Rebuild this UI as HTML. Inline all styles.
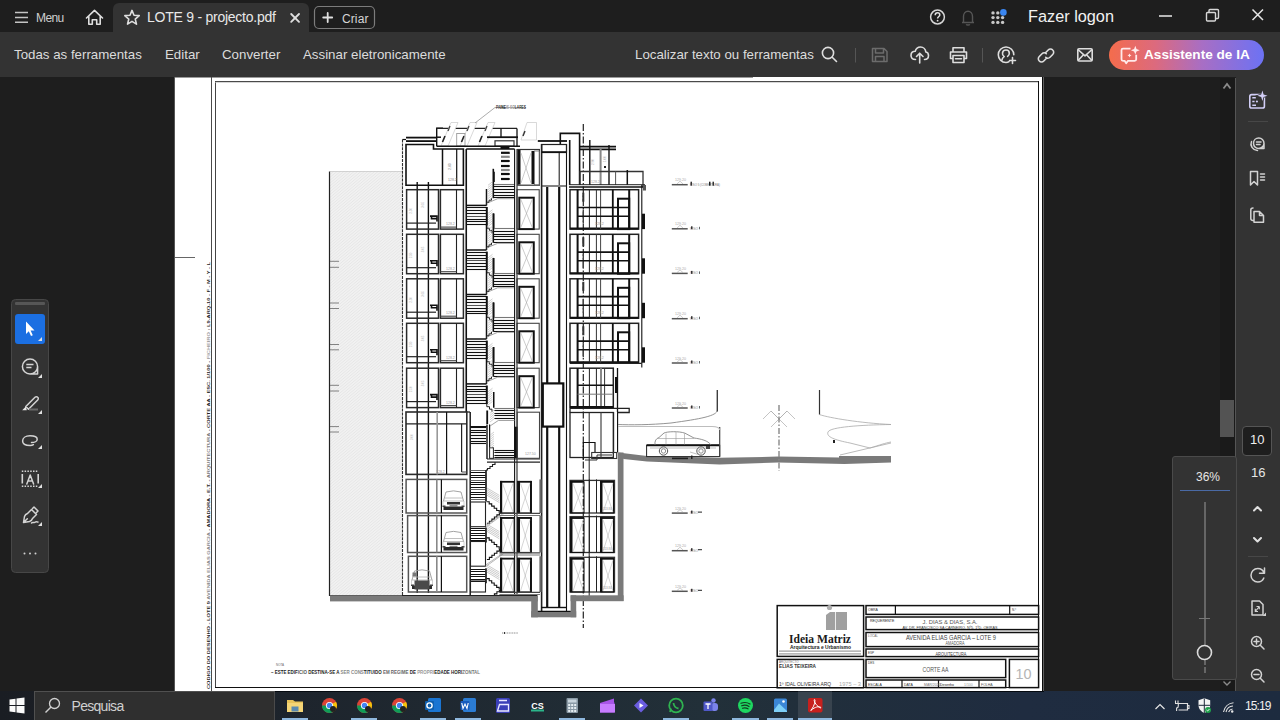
<!DOCTYPE html>
<html><head><meta charset="utf-8"><style>
*{margin:0;padding:0;box-sizing:border-box}
html,body{width:1280px;height:720px;overflow:hidden;background:#1e1e1e;font-family:"Liberation Sans",sans-serif;position:relative}
.abs{position:absolute}
.t{position:absolute;color:#dcdcdc;font-size:13.3px;white-space:nowrap;line-height:16px}
svg{position:absolute;overflow:visible}
</style></head><body>
<div class="abs" style="left:0px;top:0px;width:1280px;height:32px;background:#1e1e1e"></div>
<div class="abs" style="left:113px;top:3px;width:196px;height:30px;background:#333;border-radius:6px 6px 0 0"></div>
<div class="abs" style="left:0px;top:32px;width:1280px;height:45px;background:#333"></div>
<div class="abs" style="left:753px;top:77px;width:527px;height:1px;background:#333"></div>
<div class="abs" style="left:0px;top:77px;width:1236px;height:614px;background:#1e1e1e"></div>
<div class="abs" style="left:1220px;top:78px;width:15px;height:613px;background:#1a1a1a"></div>
<div class="abs" style="left:1220px;top:400px;width:14px;height:37px;background:#535353"></div>
<div class="abs" style="left:1235px;top:78px;width:45px;height:613px;background:#333;border-left:1px solid #555"></div>
<div class="abs" style="left:0px;top:691px;width:1280px;height:29px;background:linear-gradient(90deg,#1a1d23 0%,#1d232b 20%,#223039 55%,#1f2c40 80%,#1d2b3f 100%)"></div>
<div class="abs" style="left:175px;top:77px;width:867px;height:614px;background:#fff"></div>
<div class="abs" style="left:175px;top:77px;width:578px;height:1px;background:#9a9a9a"></div>
<svg style="left:0;top:0" width="1280" height="720"><defs><pattern id="hatch" width="2.2" height="2.2" patternUnits="userSpaceOnUse" patternTransform="rotate(50)"><rect width="2.2" height="2.2" fill="#f1f1f1"/><line x1="0" y1="0" x2="0" y2="2.2" stroke="#e0e0e0" stroke-width="0.9"/></pattern></defs><rect x="211.00" y="77.00" width="1.00" height="614.00" fill="#4a4a4a"/><rect x="215.00" y="81.00" width="824.00" height="1.00" fill="#4a4a4a"/><rect x="215.00" y="81.00" width="1.00" height="607.00" fill="#444"/><rect x="1038.00" y="81.00" width="1.00" height="607.00" fill="#111"/><rect x="215.00" y="687.00" width="824.00" height="1.00" fill="#111"/><rect x="215.00" y="82.00" width="823.00" height="0.60" fill="#bbb"/><rect x="1042.00" y="77.00" width="1.00" height="614.00" fill="#0a0a0a"/><rect x="1043.00" y="77.00" width="1.00" height="614.00" fill="#606060"/><rect x="174.00" y="77.00" width="1.00" height="614.00" fill="#555"/><rect x="175.00" y="691.00" width="869.00" height="1.00" fill="#050a10"/><line x1="175.00" y1="257.50" x2="195.00" y2="257.50" stroke="#666" stroke-width="1" /><text x="0" y="0" transform="translate(209.6 689) rotate(-90)" font-family="Liberation Sans" font-size="4.2" font-weight="bold" fill="#222" textLength="427" lengthAdjust="spacingAndGlyphs">CODIGO DO DESENHO - LOTE 9 <tspan fill="#888">AVENIDA ELIAS GARCIA</tspan> - AMADORA - E.T. - <tspan fill="#777">ARQUITECTURA</tspan> - CORTE AA - ESC. 1/100 - <tspan fill="#999">FICHEIRO</tspan> : L9-ARQ-10 - F - M - Y - L</text><rect x="329.5" y="171.5" width="73" height="424" fill="url(#hatch)"/><line x1="329.50" y1="171.50" x2="329.50" y2="596.00" stroke="#222" stroke-width="1.2" /><line x1="329.50" y1="171.50" x2="402.50" y2="171.50" stroke="#999" stroke-width="0.8" stroke-dasharray="1 1"/><line x1="330.00" y1="261.30" x2="339.00" y2="261.30" stroke="#666" stroke-width="0.8" /><line x1="330.00" y1="267.30" x2="339.00" y2="267.30" stroke="#666" stroke-width="0.8" /><line x1="330.00" y1="303.00" x2="339.00" y2="303.00" stroke="#666" stroke-width="0.8" /><line x1="330.00" y1="308.50" x2="339.00" y2="308.50" stroke="#666" stroke-width="0.8" /><line x1="330.00" y1="344.50" x2="339.00" y2="344.50" stroke="#666" stroke-width="0.8" /><line x1="330.00" y1="349.80" x2="339.00" y2="349.80" stroke="#666" stroke-width="0.8" /><line x1="330.00" y1="385.30" x2="339.00" y2="385.30" stroke="#666" stroke-width="0.8" /><line x1="330.00" y1="391.00" x2="339.00" y2="391.00" stroke="#666" stroke-width="0.8" /><line x1="330.00" y1="426.60" x2="339.00" y2="426.60" stroke="#666" stroke-width="0.8" /><line x1="330.00" y1="432.00" x2="339.00" y2="432.00" stroke="#666" stroke-width="0.8" /><line x1="329.50" y1="595.50" x2="402.50" y2="595.50" stroke="#222" stroke-width="1.2" /><line x1="402.50" y1="139.50" x2="402.50" y2="596.00" stroke="#333" stroke-width="1.1" stroke-dasharray="3 0.9"/><line x1="402.50" y1="139.50" x2="406.00" y2="139.50" stroke="#111" stroke-width="1.2" /><line x1="406.00" y1="137.60" x2="437.00" y2="137.60" stroke="#111" stroke-width="1.8" /><line x1="406.00" y1="141.10" x2="437.00" y2="141.10" stroke="#111" stroke-width="1.8" /><path d="M436.7 146.5V128.3H443" stroke="#111" stroke-width="1.4" fill="none" /><line x1="436.70" y1="128.40" x2="517.00" y2="128.40" stroke="#222" stroke-width="1.3" /><path d="M441 146L451 122.5H458L448 146Z" stroke="#c8c8c8" stroke-width="0.7" fill="#fff" /><line x1="442.50" y1="142.00" x2="445.00" y2="136.00" stroke="#222" stroke-width="1.6" /><line x1="448.00" y1="131.00" x2="450.00" y2="126.00" stroke="#444" stroke-width="1.3" /><path d="M460 146L470 122.5H477L467 146Z" stroke="#c8c8c8" stroke-width="0.7" fill="#fff" /><line x1="461.50" y1="142.00" x2="464.00" y2="136.00" stroke="#222" stroke-width="1.6" /><line x1="467.00" y1="131.00" x2="469.00" y2="126.00" stroke="#444" stroke-width="1.3" /><path d="M478 146L488 122.5H495L485 146Z" stroke="#c8c8c8" stroke-width="0.7" fill="#fff" /><line x1="479.50" y1="142.00" x2="482.00" y2="136.00" stroke="#222" stroke-width="1.6" /><line x1="485.00" y1="131.00" x2="487.00" y2="126.00" stroke="#444" stroke-width="1.3" /><path d="M521 140L527 122.5H536.5V140Z" stroke="#c8c8c8" stroke-width="0.7" fill="#fff" /><line x1="523.00" y1="136.00" x2="525.00" y2="131.00" stroke="#333" stroke-width="1.4" /><rect x="456.70" y="133.50" width="8.30" height="12.50" stroke="#999" stroke-width="0.9" fill="none" /><line x1="487.00" y1="137.20" x2="518.00" y2="137.20" stroke="#111" stroke-width="1.8" /><line x1="436.70" y1="137.20" x2="441.00" y2="137.20" stroke="#111" stroke-width="1.5" /><line x1="501.00" y1="128.40" x2="501.00" y2="137.20" stroke="#111" stroke-width="1.3" /><line x1="517.00" y1="128.40" x2="517.00" y2="146.00" stroke="#111" stroke-width="1.3" /><rect x="495.00" y="140.80" width="19.00" height="5.40" stroke="#333" stroke-width="1.2" fill="none" /><line x1="437.00" y1="146.30" x2="520.00" y2="146.30" stroke="#111" stroke-width="1.4" /><path d="M475 123L495 107.5H526" stroke="#888" stroke-width="0.7" fill="none" /><text x="496" y="109.3" font-family="Liberation Sans" font-size="4.5" font-weight="bold" fill="#333" textLength="30" lengthAdjust="spacingAndGlyphs">PA<tspan fill="#111">INE</tspan><tspan fill="#999">IS SO</tspan>LARES</text><path d="M406 144.5H433.5V149H463.4V185.2H406Z" stroke="#111" stroke-width="1.6" fill="none" /><line x1="442.50" y1="149.00" x2="442.50" y2="185.50" stroke="#111" stroke-width="1.5" /><line x1="456.70" y1="149.00" x2="456.70" y2="185.20" stroke="#111" stroke-width="1.2" /><text x="451" y="170" font-family="Liberation Sans" font-size="3.5" fill="#777" transform="rotate(-90 451 170)">2.80</text><text x="448" y="181" font-family="Liberation Sans" font-size="3.5" fill="#888" >128.2</text><line x1="417.20" y1="182.00" x2="417.20" y2="593.00" stroke="#111" stroke-width="1.4" /><line x1="428.40" y1="182.00" x2="428.40" y2="593.00" stroke="#111" stroke-width="1.4" /><rect x="406.60" y="189.70" width="31.90" height="39.40" stroke="#2a2a2a" stroke-width="1.5" fill="none" /><rect x="440.40" y="189.70" width="23.00" height="39.40" stroke="#2a2a2a" stroke-width="1.5" fill="none" /><line x1="456.50" y1="189.70" x2="456.50" y2="229.10" stroke="#222" stroke-width="1.1" /><line x1="440.40" y1="227.10" x2="456.50" y2="227.10" stroke="#444" stroke-width="1.1" /><line x1="406.60" y1="223.10" x2="436.00" y2="223.10" stroke="#222" stroke-width="1.2" /><path d="M430 216.1H437V221.6M431.5 216.1V218.6H437" stroke="#111" stroke-width="1.6" fill="none" /><text x="446" y="225.1" font-family="Liberation Sans" font-size="3.5" fill="#999" >128.2</text><text x="412" y="213.7" font-family="Liberation Sans" font-size="3" fill="#aaa" transform="rotate(-90 412 213.7)">2.50</text><text x="424" y="207.7" font-family="Liberation Sans" font-size="3" fill="#aaa" transform="rotate(-90 424 207.7)">3.05</text><line x1="493.75" y1="184.50" x2="514.60" y2="184.50" stroke="#777" stroke-width="1.1" /><line x1="493.75" y1="186.50" x2="514.60" y2="186.50" stroke="#111" stroke-width="1.1" /><line x1="493.75" y1="189.50" x2="514.60" y2="189.50" stroke="#111" stroke-width="1.1" /><line x1="493.75" y1="192.50" x2="514.60" y2="192.50" stroke="#111" stroke-width="1.1" /><line x1="493.75" y1="195.50" x2="514.60" y2="195.50" stroke="#111" stroke-width="1.1" /><line x1="493.75" y1="197.50" x2="514.60" y2="197.50" stroke="#111" stroke-width="1.1" /><line x1="493.30" y1="168.80" x2="493.30" y2="198.20" stroke="#111" stroke-width="1.6" /><line x1="486.50" y1="189.00" x2="486.50" y2="205.40" stroke="#111" stroke-width="1.5" /><line x1="466.25" y1="205.40" x2="486.50" y2="205.40" stroke="#111" stroke-width="1.5" /><line x1="466.25" y1="207.50" x2="487.00" y2="207.50" stroke="#111" stroke-width="1.1" /><line x1="466.25" y1="210.50" x2="487.00" y2="210.50" stroke="#111" stroke-width="1.1" /><line x1="466.25" y1="213.50" x2="487.00" y2="213.50" stroke="#111" stroke-width="1.1" /><line x1="466.25" y1="216.50" x2="487.00" y2="216.50" stroke="#555" stroke-width="1.1" /><line x1="466.25" y1="219.50" x2="487.00" y2="219.50" stroke="#111" stroke-width="1.1" /><line x1="466.25" y1="221.50" x2="487.00" y2="221.50" stroke="#111" stroke-width="1.1" /><line x1="466.25" y1="224.50" x2="487.00" y2="224.50" stroke="#111" stroke-width="1.1" /><line x1="486.80" y1="207.00" x2="486.80" y2="225.50" stroke="#111" stroke-width="2" /><line x1="493.75" y1="213.40" x2="493.75" y2="229.20" stroke="#111" stroke-width="1.5" /><path d="M487.5 203.0L497.7 198.7H514.4" stroke="#999" stroke-width="0.9" fill="none" /><path d="M486.5 205.39999999999998V202.2H489V200.2H491.5V198.2" stroke="#222" stroke-width="1.0" fill="none" /><path d="M486.8 225.5V228.2H489.5V230.7H492V233.2" stroke="#222" stroke-width="1.0" fill="none" /><line x1="488.00" y1="185.30" x2="492.50" y2="181.70" stroke="#b0b0b0" stroke-width="0.6" /><line x1="488.00" y1="187.50" x2="492.50" y2="183.90" stroke="#b0b0b0" stroke-width="0.6" /><line x1="488.00" y1="189.70" x2="492.50" y2="186.10" stroke="#b0b0b0" stroke-width="0.6" /><line x1="488.00" y1="191.90" x2="492.50" y2="188.30" stroke="#b0b0b0" stroke-width="0.6" /><line x1="488.00" y1="194.10" x2="492.50" y2="190.50" stroke="#b0b0b0" stroke-width="0.6" /><line x1="488.00" y1="196.30" x2="492.50" y2="192.70" stroke="#b0b0b0" stroke-width="0.6" /><line x1="488.00" y1="198.50" x2="492.50" y2="194.90" stroke="#b0b0b0" stroke-width="0.6" /><line x1="488.00" y1="200.70" x2="492.50" y2="197.10" stroke="#b0b0b0" stroke-width="0.6" /><line x1="488.00" y1="213.30" x2="492.50" y2="209.70" stroke="#b0b0b0" stroke-width="0.6" /><line x1="488.00" y1="215.50" x2="492.50" y2="211.90" stroke="#b0b0b0" stroke-width="0.6" /><line x1="488.00" y1="217.70" x2="492.50" y2="214.10" stroke="#b0b0b0" stroke-width="0.6" /><line x1="488.00" y1="219.90" x2="492.50" y2="216.30" stroke="#b0b0b0" stroke-width="0.6" /><line x1="488.00" y1="222.10" x2="492.50" y2="218.50" stroke="#b0b0b0" stroke-width="0.6" /><line x1="488.00" y1="224.30" x2="492.50" y2="220.70" stroke="#b0b0b0" stroke-width="0.6" /><line x1="488.00" y1="226.50" x2="492.50" y2="222.90" stroke="#b0b0b0" stroke-width="0.6" /><rect x="517.00" y="189.70" width="22.20" height="39.40" stroke="#444" stroke-width="1.1" fill="none" /><rect x="519.30" y="197.70" width="14.45" height="31.40" stroke="#111" stroke-width="2" fill="#fff" /><path d="M520.5 198.7L532.5 228.1M532.5 198.7L520.5 228.1" stroke="#aaa" stroke-width="0.6" fill="none" /><rect x="406.60" y="234.30" width="31.90" height="39.40" stroke="#2a2a2a" stroke-width="1.5" fill="none" /><rect x="440.40" y="234.30" width="23.00" height="39.40" stroke="#2a2a2a" stroke-width="1.5" fill="none" /><line x1="456.50" y1="234.30" x2="456.50" y2="273.70" stroke="#222" stroke-width="1.1" /><line x1="440.40" y1="271.70" x2="456.50" y2="271.70" stroke="#444" stroke-width="1.1" /><line x1="406.60" y1="267.70" x2="436.00" y2="267.70" stroke="#222" stroke-width="1.2" /><path d="M430 260.7H437V266.2M431.5 260.7V263.2H437" stroke="#111" stroke-width="1.6" fill="none" /><text x="446" y="269.7" font-family="Liberation Sans" font-size="3.5" fill="#999" >128.2</text><text x="412" y="258.3" font-family="Liberation Sans" font-size="3" fill="#aaa" transform="rotate(-90 412 258.3)">2.50</text><text x="424" y="252.3" font-family="Liberation Sans" font-size="3" fill="#aaa" transform="rotate(-90 424 252.3)">3.05</text><line x1="493.75" y1="228.50" x2="514.60" y2="228.50" stroke="#777" stroke-width="1.1" /><line x1="493.75" y1="231.50" x2="514.60" y2="231.50" stroke="#111" stroke-width="1.1" /><line x1="493.75" y1="234.50" x2="514.60" y2="234.50" stroke="#111" stroke-width="1.1" /><line x1="493.75" y1="236.50" x2="514.60" y2="236.50" stroke="#111" stroke-width="1.1" /><line x1="493.75" y1="239.50" x2="514.60" y2="239.50" stroke="#111" stroke-width="1.1" /><line x1="493.75" y1="242.50" x2="514.60" y2="242.50" stroke="#111" stroke-width="1.1" /><line x1="493.30" y1="213.40" x2="493.30" y2="242.80" stroke="#111" stroke-width="1.6" /><line x1="486.50" y1="224.80" x2="486.50" y2="250.00" stroke="#111" stroke-width="1.5" /><line x1="466.25" y1="250.00" x2="486.50" y2="250.00" stroke="#111" stroke-width="1.5" /><line x1="466.25" y1="252.50" x2="487.00" y2="252.50" stroke="#111" stroke-width="1.1" /><line x1="466.25" y1="255.50" x2="487.00" y2="255.50" stroke="#111" stroke-width="1.1" /><line x1="466.25" y1="258.50" x2="487.00" y2="258.50" stroke="#111" stroke-width="1.1" /><line x1="466.25" y1="260.50" x2="487.00" y2="260.50" stroke="#555" stroke-width="1.1" /><line x1="466.25" y1="263.50" x2="487.00" y2="263.50" stroke="#111" stroke-width="1.1" /><line x1="466.25" y1="266.50" x2="487.00" y2="266.50" stroke="#111" stroke-width="1.1" /><line x1="466.25" y1="269.50" x2="487.00" y2="269.50" stroke="#111" stroke-width="1.1" /><line x1="486.80" y1="251.60" x2="486.80" y2="270.10" stroke="#111" stroke-width="2" /><line x1="493.75" y1="258.00" x2="493.75" y2="273.80" stroke="#111" stroke-width="1.5" /><path d="M487.5 247.60000000000002L497.7 243.3H514.4" stroke="#999" stroke-width="0.9" fill="none" /><path d="M486.5 250.0V246.8H489V244.8H491.5V242.8" stroke="#222" stroke-width="1.0" fill="none" /><path d="M486.8 270.1V272.8H489.5V275.3H492V277.8" stroke="#222" stroke-width="1.0" fill="none" /><line x1="488.00" y1="229.90" x2="492.50" y2="226.30" stroke="#b0b0b0" stroke-width="0.6" /><line x1="488.00" y1="232.10" x2="492.50" y2="228.50" stroke="#b0b0b0" stroke-width="0.6" /><line x1="488.00" y1="234.30" x2="492.50" y2="230.70" stroke="#b0b0b0" stroke-width="0.6" /><line x1="488.00" y1="236.50" x2="492.50" y2="232.90" stroke="#b0b0b0" stroke-width="0.6" /><line x1="488.00" y1="238.70" x2="492.50" y2="235.10" stroke="#b0b0b0" stroke-width="0.6" /><line x1="488.00" y1="240.90" x2="492.50" y2="237.30" stroke="#b0b0b0" stroke-width="0.6" /><line x1="488.00" y1="243.10" x2="492.50" y2="239.50" stroke="#b0b0b0" stroke-width="0.6" /><line x1="488.00" y1="245.30" x2="492.50" y2="241.70" stroke="#b0b0b0" stroke-width="0.6" /><line x1="488.00" y1="257.90" x2="492.50" y2="254.30" stroke="#b0b0b0" stroke-width="0.6" /><line x1="488.00" y1="260.10" x2="492.50" y2="256.50" stroke="#b0b0b0" stroke-width="0.6" /><line x1="488.00" y1="262.30" x2="492.50" y2="258.70" stroke="#b0b0b0" stroke-width="0.6" /><line x1="488.00" y1="264.50" x2="492.50" y2="260.90" stroke="#b0b0b0" stroke-width="0.6" /><line x1="488.00" y1="266.70" x2="492.50" y2="263.10" stroke="#b0b0b0" stroke-width="0.6" /><line x1="488.00" y1="268.90" x2="492.50" y2="265.30" stroke="#b0b0b0" stroke-width="0.6" /><line x1="488.00" y1="271.10" x2="492.50" y2="267.50" stroke="#b0b0b0" stroke-width="0.6" /><rect x="517.00" y="234.30" width="22.20" height="39.40" stroke="#444" stroke-width="1.1" fill="none" /><rect x="519.30" y="242.30" width="14.45" height="31.40" stroke="#111" stroke-width="2" fill="#fff" /><path d="M520.5 243.3L532.5 272.7M532.5 243.3L520.5 272.7" stroke="#aaa" stroke-width="0.6" fill="none" /><rect x="406.60" y="278.80" width="31.90" height="39.40" stroke="#2a2a2a" stroke-width="1.5" fill="none" /><rect x="440.40" y="278.80" width="23.00" height="39.40" stroke="#2a2a2a" stroke-width="1.5" fill="none" /><line x1="456.50" y1="278.80" x2="456.50" y2="318.20" stroke="#222" stroke-width="1.1" /><line x1="440.40" y1="316.20" x2="456.50" y2="316.20" stroke="#444" stroke-width="1.1" /><line x1="406.60" y1="312.20" x2="436.00" y2="312.20" stroke="#222" stroke-width="1.2" /><path d="M430 305.2H437V310.7M431.5 305.2V307.7H437" stroke="#111" stroke-width="1.6" fill="none" /><text x="446" y="314.2" font-family="Liberation Sans" font-size="3.5" fill="#999" >128.2</text><text x="412" y="302.8" font-family="Liberation Sans" font-size="3" fill="#aaa" transform="rotate(-90 412 302.8)">2.50</text><text x="424" y="296.8" font-family="Liberation Sans" font-size="3" fill="#aaa" transform="rotate(-90 424 296.8)">3.05</text><line x1="493.75" y1="273.50" x2="514.60" y2="273.50" stroke="#777" stroke-width="1.1" /><line x1="493.75" y1="275.50" x2="514.60" y2="275.50" stroke="#111" stroke-width="1.1" /><line x1="493.75" y1="278.50" x2="514.60" y2="278.50" stroke="#111" stroke-width="1.1" /><line x1="493.75" y1="281.50" x2="514.60" y2="281.50" stroke="#111" stroke-width="1.1" /><line x1="493.75" y1="284.50" x2="514.60" y2="284.50" stroke="#111" stroke-width="1.1" /><line x1="493.75" y1="286.50" x2="514.60" y2="286.50" stroke="#111" stroke-width="1.1" /><line x1="493.30" y1="257.90" x2="493.30" y2="287.30" stroke="#111" stroke-width="1.6" /><line x1="486.50" y1="269.30" x2="486.50" y2="294.50" stroke="#111" stroke-width="1.5" /><line x1="466.25" y1="294.50" x2="486.50" y2="294.50" stroke="#111" stroke-width="1.5" /><line x1="466.25" y1="296.50" x2="487.00" y2="296.50" stroke="#111" stroke-width="1.1" /><line x1="466.25" y1="299.50" x2="487.00" y2="299.50" stroke="#111" stroke-width="1.1" /><line x1="466.25" y1="302.50" x2="487.00" y2="302.50" stroke="#111" stroke-width="1.1" /><line x1="466.25" y1="305.50" x2="487.00" y2="305.50" stroke="#555" stroke-width="1.1" /><line x1="466.25" y1="308.50" x2="487.00" y2="308.50" stroke="#111" stroke-width="1.1" /><line x1="466.25" y1="311.50" x2="487.00" y2="311.50" stroke="#111" stroke-width="1.1" /><line x1="466.25" y1="313.50" x2="487.00" y2="313.50" stroke="#111" stroke-width="1.1" /><line x1="486.80" y1="296.10" x2="486.80" y2="314.60" stroke="#111" stroke-width="2" /><line x1="493.75" y1="302.50" x2="493.75" y2="318.30" stroke="#111" stroke-width="1.5" /><path d="M487.5 292.1L497.7 287.8H514.4" stroke="#999" stroke-width="0.9" fill="none" /><path d="M486.5 294.5V291.3H489V289.3H491.5V287.3" stroke="#222" stroke-width="1.0" fill="none" /><path d="M486.8 314.6V317.3H489.5V319.8H492V322.3" stroke="#222" stroke-width="1.0" fill="none" /><line x1="488.00" y1="274.40" x2="492.50" y2="270.80" stroke="#b0b0b0" stroke-width="0.6" /><line x1="488.00" y1="276.60" x2="492.50" y2="273.00" stroke="#b0b0b0" stroke-width="0.6" /><line x1="488.00" y1="278.80" x2="492.50" y2="275.20" stroke="#b0b0b0" stroke-width="0.6" /><line x1="488.00" y1="281.00" x2="492.50" y2="277.40" stroke="#b0b0b0" stroke-width="0.6" /><line x1="488.00" y1="283.20" x2="492.50" y2="279.60" stroke="#b0b0b0" stroke-width="0.6" /><line x1="488.00" y1="285.40" x2="492.50" y2="281.80" stroke="#b0b0b0" stroke-width="0.6" /><line x1="488.00" y1="287.60" x2="492.50" y2="284.00" stroke="#b0b0b0" stroke-width="0.6" /><line x1="488.00" y1="289.80" x2="492.50" y2="286.20" stroke="#b0b0b0" stroke-width="0.6" /><line x1="488.00" y1="302.40" x2="492.50" y2="298.80" stroke="#b0b0b0" stroke-width="0.6" /><line x1="488.00" y1="304.60" x2="492.50" y2="301.00" stroke="#b0b0b0" stroke-width="0.6" /><line x1="488.00" y1="306.80" x2="492.50" y2="303.20" stroke="#b0b0b0" stroke-width="0.6" /><line x1="488.00" y1="309.00" x2="492.50" y2="305.40" stroke="#b0b0b0" stroke-width="0.6" /><line x1="488.00" y1="311.20" x2="492.50" y2="307.60" stroke="#b0b0b0" stroke-width="0.6" /><line x1="488.00" y1="313.40" x2="492.50" y2="309.80" stroke="#b0b0b0" stroke-width="0.6" /><line x1="488.00" y1="315.60" x2="492.50" y2="312.00" stroke="#b0b0b0" stroke-width="0.6" /><rect x="517.00" y="278.80" width="22.20" height="39.40" stroke="#444" stroke-width="1.1" fill="none" /><rect x="519.30" y="286.80" width="14.45" height="31.40" stroke="#111" stroke-width="2" fill="#fff" /><path d="M520.5 287.8L532.5 317.2M532.5 287.8L520.5 317.2" stroke="#aaa" stroke-width="0.6" fill="none" /><rect x="406.60" y="323.30" width="31.90" height="39.40" stroke="#2a2a2a" stroke-width="1.5" fill="none" /><rect x="440.40" y="323.30" width="23.00" height="39.40" stroke="#2a2a2a" stroke-width="1.5" fill="none" /><line x1="456.50" y1="323.30" x2="456.50" y2="362.70" stroke="#222" stroke-width="1.1" /><line x1="440.40" y1="360.70" x2="456.50" y2="360.70" stroke="#444" stroke-width="1.1" /><line x1="406.60" y1="356.70" x2="436.00" y2="356.70" stroke="#222" stroke-width="1.2" /><path d="M430 349.7H437V355.2M431.5 349.7V352.2H437" stroke="#111" stroke-width="1.6" fill="none" /><text x="446" y="358.7" font-family="Liberation Sans" font-size="3.5" fill="#999" >128.2</text><text x="412" y="347.3" font-family="Liberation Sans" font-size="3" fill="#aaa" transform="rotate(-90 412 347.3)">2.50</text><text x="424" y="341.3" font-family="Liberation Sans" font-size="3" fill="#aaa" transform="rotate(-90 424 341.3)">3.05</text><line x1="493.75" y1="317.50" x2="514.60" y2="317.50" stroke="#777" stroke-width="1.1" /><line x1="493.75" y1="320.50" x2="514.60" y2="320.50" stroke="#111" stroke-width="1.1" /><line x1="493.75" y1="323.50" x2="514.60" y2="323.50" stroke="#111" stroke-width="1.1" /><line x1="493.75" y1="325.50" x2="514.60" y2="325.50" stroke="#111" stroke-width="1.1" /><line x1="493.75" y1="328.50" x2="514.60" y2="328.50" stroke="#111" stroke-width="1.1" /><line x1="493.75" y1="331.50" x2="514.60" y2="331.50" stroke="#111" stroke-width="1.1" /><line x1="493.30" y1="302.40" x2="493.30" y2="331.80" stroke="#111" stroke-width="1.6" /><line x1="486.50" y1="313.80" x2="486.50" y2="339.00" stroke="#111" stroke-width="1.5" /><line x1="466.25" y1="339.00" x2="486.50" y2="339.00" stroke="#111" stroke-width="1.5" /><line x1="466.25" y1="341.50" x2="487.00" y2="341.50" stroke="#111" stroke-width="1.1" /><line x1="466.25" y1="344.50" x2="487.00" y2="344.50" stroke="#111" stroke-width="1.1" /><line x1="466.25" y1="347.50" x2="487.00" y2="347.50" stroke="#111" stroke-width="1.1" /><line x1="466.25" y1="349.50" x2="487.00" y2="349.50" stroke="#555" stroke-width="1.1" /><line x1="466.25" y1="352.50" x2="487.00" y2="352.50" stroke="#111" stroke-width="1.1" /><line x1="466.25" y1="355.50" x2="487.00" y2="355.50" stroke="#111" stroke-width="1.1" /><line x1="466.25" y1="358.50" x2="487.00" y2="358.50" stroke="#111" stroke-width="1.1" /><line x1="486.80" y1="340.60" x2="486.80" y2="359.10" stroke="#111" stroke-width="2" /><line x1="493.75" y1="347.00" x2="493.75" y2="362.80" stroke="#111" stroke-width="1.5" /><path d="M487.5 336.6L497.7 332.3H514.4" stroke="#999" stroke-width="0.9" fill="none" /><path d="M486.5 339.0V335.8H489V333.8H491.5V331.8" stroke="#222" stroke-width="1.0" fill="none" /><path d="M486.8 359.1V361.8H489.5V364.3H492V366.8" stroke="#222" stroke-width="1.0" fill="none" /><line x1="488.00" y1="318.90" x2="492.50" y2="315.30" stroke="#b0b0b0" stroke-width="0.6" /><line x1="488.00" y1="321.10" x2="492.50" y2="317.50" stroke="#b0b0b0" stroke-width="0.6" /><line x1="488.00" y1="323.30" x2="492.50" y2="319.70" stroke="#b0b0b0" stroke-width="0.6" /><line x1="488.00" y1="325.50" x2="492.50" y2="321.90" stroke="#b0b0b0" stroke-width="0.6" /><line x1="488.00" y1="327.70" x2="492.50" y2="324.10" stroke="#b0b0b0" stroke-width="0.6" /><line x1="488.00" y1="329.90" x2="492.50" y2="326.30" stroke="#b0b0b0" stroke-width="0.6" /><line x1="488.00" y1="332.10" x2="492.50" y2="328.50" stroke="#b0b0b0" stroke-width="0.6" /><line x1="488.00" y1="334.30" x2="492.50" y2="330.70" stroke="#b0b0b0" stroke-width="0.6" /><line x1="488.00" y1="346.90" x2="492.50" y2="343.30" stroke="#b0b0b0" stroke-width="0.6" /><line x1="488.00" y1="349.10" x2="492.50" y2="345.50" stroke="#b0b0b0" stroke-width="0.6" /><line x1="488.00" y1="351.30" x2="492.50" y2="347.70" stroke="#b0b0b0" stroke-width="0.6" /><line x1="488.00" y1="353.50" x2="492.50" y2="349.90" stroke="#b0b0b0" stroke-width="0.6" /><line x1="488.00" y1="355.70" x2="492.50" y2="352.10" stroke="#b0b0b0" stroke-width="0.6" /><line x1="488.00" y1="357.90" x2="492.50" y2="354.30" stroke="#b0b0b0" stroke-width="0.6" /><line x1="488.00" y1="360.10" x2="492.50" y2="356.50" stroke="#b0b0b0" stroke-width="0.6" /><rect x="517.00" y="323.30" width="22.20" height="39.40" stroke="#444" stroke-width="1.1" fill="none" /><rect x="519.30" y="331.30" width="14.45" height="31.40" stroke="#111" stroke-width="2" fill="#fff" /><path d="M520.5 332.3L532.5 361.7M532.5 332.3L520.5 361.7" stroke="#aaa" stroke-width="0.6" fill="none" /><rect x="406.60" y="368.20" width="31.90" height="39.40" stroke="#2a2a2a" stroke-width="1.5" fill="none" /><rect x="440.40" y="368.20" width="23.00" height="39.40" stroke="#2a2a2a" stroke-width="1.5" fill="none" /><line x1="456.50" y1="368.20" x2="456.50" y2="407.60" stroke="#222" stroke-width="1.1" /><line x1="440.40" y1="405.60" x2="456.50" y2="405.60" stroke="#444" stroke-width="1.1" /><line x1="406.60" y1="401.60" x2="436.00" y2="401.60" stroke="#222" stroke-width="1.2" /><path d="M430 394.59999999999997H437V400.09999999999997M431.5 394.59999999999997V397.09999999999997H437" stroke="#111" stroke-width="1.6" fill="none" /><text x="446" y="403.59999999999997" font-family="Liberation Sans" font-size="3.5" fill="#999" >128.2</text><text x="412" y="392.2" font-family="Liberation Sans" font-size="3" fill="#aaa" transform="rotate(-90 412 392.2)">2.50</text><text x="424" y="386.2" font-family="Liberation Sans" font-size="3" fill="#aaa" transform="rotate(-90 424 386.2)">3.05</text><line x1="493.75" y1="362.50" x2="514.60" y2="362.50" stroke="#777" stroke-width="1.1" /><line x1="493.75" y1="365.50" x2="514.60" y2="365.50" stroke="#111" stroke-width="1.1" /><line x1="493.75" y1="368.50" x2="514.60" y2="368.50" stroke="#111" stroke-width="1.1" /><line x1="493.75" y1="370.50" x2="514.60" y2="370.50" stroke="#111" stroke-width="1.1" /><line x1="493.75" y1="373.50" x2="514.60" y2="373.50" stroke="#111" stroke-width="1.1" /><line x1="493.75" y1="376.50" x2="514.60" y2="376.50" stroke="#111" stroke-width="1.1" /><line x1="493.30" y1="347.30" x2="493.30" y2="376.70" stroke="#111" stroke-width="1.6" /><line x1="486.50" y1="358.70" x2="486.50" y2="383.90" stroke="#111" stroke-width="1.5" /><line x1="466.25" y1="383.90" x2="486.50" y2="383.90" stroke="#111" stroke-width="1.5" /><line x1="466.25" y1="386.50" x2="487.00" y2="386.50" stroke="#111" stroke-width="1.1" /><line x1="466.25" y1="389.50" x2="487.00" y2="389.50" stroke="#111" stroke-width="1.1" /><line x1="466.25" y1="391.50" x2="487.00" y2="391.50" stroke="#111" stroke-width="1.1" /><line x1="466.25" y1="394.50" x2="487.00" y2="394.50" stroke="#555" stroke-width="1.1" /><line x1="466.25" y1="397.50" x2="487.00" y2="397.50" stroke="#111" stroke-width="1.1" /><line x1="466.25" y1="400.50" x2="487.00" y2="400.50" stroke="#111" stroke-width="1.1" /><line x1="466.25" y1="403.50" x2="487.00" y2="403.50" stroke="#111" stroke-width="1.1" /><line x1="486.80" y1="385.50" x2="486.80" y2="404.00" stroke="#111" stroke-width="2" /><line x1="493.75" y1="391.90" x2="493.75" y2="407.70" stroke="#111" stroke-width="1.5" /><path d="M487.5 381.5L497.7 377.2H514.4" stroke="#999" stroke-width="0.9" fill="none" /><path d="M486.5 383.9V380.7H489V378.7H491.5V376.7" stroke="#222" stroke-width="1.0" fill="none" /><path d="M486.8 404.0V406.7H489.5V409.2H492V411.7" stroke="#222" stroke-width="1.0" fill="none" /><line x1="488.00" y1="363.80" x2="492.50" y2="360.20" stroke="#b0b0b0" stroke-width="0.6" /><line x1="488.00" y1="366.00" x2="492.50" y2="362.40" stroke="#b0b0b0" stroke-width="0.6" /><line x1="488.00" y1="368.20" x2="492.50" y2="364.60" stroke="#b0b0b0" stroke-width="0.6" /><line x1="488.00" y1="370.40" x2="492.50" y2="366.80" stroke="#b0b0b0" stroke-width="0.6" /><line x1="488.00" y1="372.60" x2="492.50" y2="369.00" stroke="#b0b0b0" stroke-width="0.6" /><line x1="488.00" y1="374.80" x2="492.50" y2="371.20" stroke="#b0b0b0" stroke-width="0.6" /><line x1="488.00" y1="377.00" x2="492.50" y2="373.40" stroke="#b0b0b0" stroke-width="0.6" /><line x1="488.00" y1="379.20" x2="492.50" y2="375.60" stroke="#b0b0b0" stroke-width="0.6" /><line x1="488.00" y1="391.80" x2="492.50" y2="388.20" stroke="#b0b0b0" stroke-width="0.6" /><line x1="488.00" y1="394.00" x2="492.50" y2="390.40" stroke="#b0b0b0" stroke-width="0.6" /><line x1="488.00" y1="396.20" x2="492.50" y2="392.60" stroke="#b0b0b0" stroke-width="0.6" /><line x1="488.00" y1="398.40" x2="492.50" y2="394.80" stroke="#b0b0b0" stroke-width="0.6" /><line x1="488.00" y1="400.60" x2="492.50" y2="397.00" stroke="#b0b0b0" stroke-width="0.6" /><line x1="488.00" y1="402.80" x2="492.50" y2="399.20" stroke="#b0b0b0" stroke-width="0.6" /><line x1="488.00" y1="405.00" x2="492.50" y2="401.40" stroke="#b0b0b0" stroke-width="0.6" /><rect x="517.00" y="368.20" width="22.20" height="39.40" stroke="#444" stroke-width="1.1" fill="none" /><rect x="519.30" y="376.20" width="14.45" height="31.40" stroke="#111" stroke-width="2" fill="#fff" /><path d="M520.5 377.2L532.5 406.59999999999997M532.5 377.2L520.5 406.59999999999997" stroke="#aaa" stroke-width="0.6" fill="none" /><line x1="466.25" y1="149.00" x2="514.60" y2="149.00" stroke="#111" stroke-width="1.5" /><rect x="500.50" y="146.70" width="8.90" height="2.30" fill="#111"/><line x1="501.00" y1="152.80" x2="509.70" y2="152.80" stroke="#111" stroke-width="2.2" /><line x1="501.00" y1="156.80" x2="509.70" y2="156.80" stroke="#888" stroke-width="2.2" /><line x1="501.00" y1="161.00" x2="509.70" y2="161.00" stroke="#111" stroke-width="2.2" /><line x1="501.00" y1="166.00" x2="509.70" y2="166.00" stroke="#111" stroke-width="2.2" /><line x1="501.00" y1="170.00" x2="509.70" y2="170.00" stroke="#888" stroke-width="2.2" /><line x1="501.00" y1="174.00" x2="509.70" y2="174.00" stroke="#111" stroke-width="2.2" /><line x1="501.00" y1="179.00" x2="509.70" y2="179.00" stroke="#111" stroke-width="2.2" /><line x1="493.90" y1="171.70" x2="493.90" y2="182.00" stroke="#111" stroke-width="1.8" /><rect x="517.80" y="149.50" width="21.60" height="35.70" stroke="#333" stroke-width="1.2" fill="none" /><rect x="518.00" y="150.00" width="2.50" height="34.50" fill="#111"/><rect x="531.50" y="151.00" width="2.50" height="33.00" fill="#111"/><rect x="534.50" y="151.00" width="4.90" height="34.00" stroke="#666" stroke-width="0.8" fill="none" /><path d="M521 153L531 183M531 153L521 183" stroke="#aaa" stroke-width="0.6" fill="none" /><line x1="466.25" y1="149.00" x2="466.25" y2="412.00" stroke="#111" stroke-width="1.6" /><line x1="466.25" y1="412.00" x2="470.00" y2="412.00" stroke="#111" stroke-width="1.2" /><line x1="470.20" y1="412.00" x2="470.20" y2="596.00" stroke="#111" stroke-width="1.4" /><line x1="514.60" y1="149.00" x2="514.60" y2="596.00" stroke="#111" stroke-width="1.1" /><line x1="517.00" y1="149.00" x2="517.00" y2="596.00" stroke="#222" stroke-width="1.1" /><line x1="537.80" y1="141.00" x2="567.00" y2="141.00" stroke="#111" stroke-width="1.8" /><line x1="541.60" y1="144.00" x2="541.60" y2="612.00" stroke="#222" stroke-width="1.6" /><line x1="547.20" y1="187.00" x2="547.20" y2="608.00" stroke="#111" stroke-width="2.2" /><line x1="559.20" y1="152.00" x2="559.20" y2="185.00" stroke="#222" stroke-width="1.1" /><line x1="559.20" y1="187.00" x2="559.20" y2="608.00" stroke="#111" stroke-width="2.2" /><line x1="566.50" y1="144.00" x2="566.50" y2="612.00" stroke="#111" stroke-width="1.1" /><rect x="541.60" y="144.50" width="24.90" height="7.70" stroke="#222" stroke-width="1.2" fill="none" /><line x1="541.60" y1="152.20" x2="566.50" y2="152.20" stroke="#111" stroke-width="1.8" /><line x1="541.60" y1="186.00" x2="566.50" y2="186.00" stroke="#333" stroke-width="1.2" /><rect x="542.80" y="383.40" width="20.50" height="43.20" stroke="#111" stroke-width="2.2" fill="#fff" /><line x1="541.00" y1="607.50" x2="566.50" y2="607.50" stroke="#111" stroke-width="1.4" /><path d="M560.3 144V133.4H579.6V185" stroke="#111" stroke-width="1.6" fill="none" /><line x1="569.70" y1="140.00" x2="569.70" y2="185.00" stroke="#111" stroke-width="1.6" /><line x1="583.30" y1="124.00" x2="583.30" y2="628.00" stroke="#222" stroke-width="1.2" stroke-dasharray="7 2 1.5 2"/><rect x="406.00" y="412.00" width="60.80" height="62.40" stroke="#2a2a2a" stroke-width="1.6" fill="none" /><line x1="406.00" y1="423.80" x2="466.80" y2="423.80" stroke="#222" stroke-width="1.2" /><line x1="437.20" y1="412.00" x2="437.20" y2="474.40" stroke="#999" stroke-width="1.6" /><line x1="446.60" y1="412.00" x2="446.60" y2="474.40" stroke="#111" stroke-width="1.2" /><line x1="461.60" y1="423.80" x2="461.60" y2="472.00" stroke="#222" stroke-width="1.2" /><line x1="461.60" y1="472.00" x2="466.80" y2="472.00" stroke="#444" stroke-width="1" /><text x="436" y="473" font-family="Liberation Sans" font-size="3.5" fill="#999" >128.2</text><text x="413" y="440" font-family="Liberation Sans" font-size="3" fill="#aaa" transform="rotate(-90 413 440)">3.00</text><line x1="494.40" y1="408.50" x2="514.40" y2="408.50" stroke="#777" stroke-width="1.1" /><line x1="494.40" y1="410.50" x2="514.40" y2="410.50" stroke="#111" stroke-width="1.1" /><line x1="494.40" y1="413.50" x2="514.40" y2="413.50" stroke="#111" stroke-width="1.1" /><line x1="494.40" y1="415.50" x2="514.40" y2="415.50" stroke="#111" stroke-width="1.1" /><line x1="494.40" y1="418.50" x2="514.40" y2="418.50" stroke="#111" stroke-width="1.1" /><line x1="487.20" y1="410.50" x2="487.20" y2="424.00" stroke="#111" stroke-width="1.8" /><line x1="470.00" y1="426.70" x2="486.70" y2="426.70" stroke="#111" stroke-width="1.4" /><line x1="470.50" y1="427.50" x2="486.00" y2="427.50" stroke="#111" stroke-width="1.1" /><line x1="470.50" y1="430.50" x2="486.00" y2="430.50" stroke="#111" stroke-width="1.1" /><line x1="470.50" y1="432.50" x2="486.00" y2="432.50" stroke="#111" stroke-width="1.1" /><line x1="470.50" y1="435.50" x2="486.00" y2="435.50" stroke="#111" stroke-width="1.1" /><line x1="470.50" y1="438.50" x2="486.00" y2="438.50" stroke="#111" stroke-width="1.1" /><line x1="470.50" y1="441.50" x2="486.00" y2="441.50" stroke="#111" stroke-width="1.1" /><line x1="470.50" y1="443.50" x2="486.00" y2="443.50" stroke="#111" stroke-width="1.1" /><line x1="487.00" y1="424.40" x2="487.00" y2="459.00" stroke="#111" stroke-width="1.4" /><line x1="489.60" y1="424.40" x2="489.60" y2="447.80" stroke="#111" stroke-width="1.2" /><rect x="489.60" y="447.80" width="3.80" height="10.50" stroke="#222" stroke-width="1.0" fill="none" /><line x1="490.00" y1="413.20" x2="494.00" y2="410.00" stroke="#b0b0b0" stroke-width="0.6" /><line x1="490.00" y1="415.40" x2="494.00" y2="412.20" stroke="#b0b0b0" stroke-width="0.6" /><line x1="490.00" y1="417.60" x2="494.00" y2="414.40" stroke="#b0b0b0" stroke-width="0.6" /><line x1="490.00" y1="419.80" x2="494.00" y2="416.60" stroke="#b0b0b0" stroke-width="0.6" /><line x1="490.00" y1="422.00" x2="494.00" y2="418.80" stroke="#b0b0b0" stroke-width="0.6" /><line x1="490.00" y1="435.20" x2="494.00" y2="432.00" stroke="#b0b0b0" stroke-width="0.6" /><line x1="490.00" y1="437.40" x2="494.00" y2="434.20" stroke="#b0b0b0" stroke-width="0.6" /><line x1="490.00" y1="439.60" x2="494.00" y2="436.40" stroke="#b0b0b0" stroke-width="0.6" /><line x1="490.00" y1="441.80" x2="494.00" y2="438.60" stroke="#b0b0b0" stroke-width="0.6" /><line x1="490.00" y1="444.00" x2="494.00" y2="440.80" stroke="#b0b0b0" stroke-width="0.6" /><line x1="490.00" y1="446.20" x2="494.00" y2="443.00" stroke="#b0b0b0" stroke-width="0.6" /><line x1="490.00" y1="448.40" x2="494.00" y2="445.20" stroke="#b0b0b0" stroke-width="0.6" /><path d="M490 426L498.3 420.5H514.4" stroke="#999" stroke-width="0.9" fill="none" /><line x1="494.40" y1="450.50" x2="514.40" y2="450.50" stroke="#111" stroke-width="1.1" /><line x1="494.40" y1="452.50" x2="514.40" y2="452.50" stroke="#111" stroke-width="1.1" /><line x1="494.40" y1="455.50" x2="514.40" y2="455.50" stroke="#111" stroke-width="1.1" /><line x1="494.40" y1="457.50" x2="514.40" y2="457.50" stroke="#111" stroke-width="1.1" /><rect x="514.40" y="426.70" width="3.40" height="31.60" fill="#111"/><line x1="487.00" y1="459.00" x2="540.00" y2="459.00" stroke="#222" stroke-width="1.2" /><line x1="487.00" y1="462.20" x2="540.00" y2="462.20" stroke="#222" stroke-width="1.2" /><path d="M495 462.2V464.5H492.5V466.5H490V468.5H487.5V470H486" stroke="#222" stroke-width="1.1" fill="none" /><rect x="517.20" y="412.20" width="22.30" height="46.10" stroke="#444" stroke-width="1.1" fill="none" /><text x="525" y="455" font-family="Liberation Sans" font-size="3.5" fill="#999" >127.50</text><rect x="406.10" y="479.40" width="60.60" height="33.60" stroke="#555" stroke-width="1.5" fill="none" /><line x1="436.80" y1="479.40" x2="436.80" y2="513.00" stroke="#888" stroke-width="1.6" /><line x1="441.40" y1="479.40" x2="441.40" y2="513.00" stroke="#111" stroke-width="1.2" /><line x1="470.50" y1="470.50" x2="485.50" y2="470.50" stroke="#666" stroke-width="1.0" /><line x1="470.50" y1="472.50" x2="485.50" y2="472.50" stroke="#111" stroke-width="1.0" /><line x1="470.50" y1="475.50" x2="485.50" y2="475.50" stroke="#111" stroke-width="1.0" /><line x1="470.50" y1="477.50" x2="485.50" y2="477.50" stroke="#111" stroke-width="1.0" /><line x1="470.50" y1="480.50" x2="485.50" y2="480.50" stroke="#666" stroke-width="1.0" /><line x1="470.50" y1="482.50" x2="485.50" y2="482.50" stroke="#111" stroke-width="1.0" /><line x1="470.50" y1="484.50" x2="485.50" y2="484.50" stroke="#111" stroke-width="1.0" /><line x1="470.50" y1="487.50" x2="485.50" y2="487.50" stroke="#111" stroke-width="1.0" /><line x1="470.50" y1="489.50" x2="485.50" y2="489.50" stroke="#666" stroke-width="1.0" /><line x1="470.50" y1="492.50" x2="485.50" y2="492.50" stroke="#111" stroke-width="1.0" /><line x1="470.50" y1="494.50" x2="485.50" y2="494.50" stroke="#111" stroke-width="1.0" /><line x1="470.50" y1="497.50" x2="485.50" y2="497.50" stroke="#111" stroke-width="1.0" /><line x1="470.50" y1="499.50" x2="485.50" y2="499.50" stroke="#666" stroke-width="1.0" /><line x1="486.00" y1="470.00" x2="486.00" y2="501.50" stroke="#111" stroke-width="1.6" /><rect x="470.50" y="502.00" width="15.00" height="24.70" stroke="#222" stroke-width="1.1" fill="none" /><path d="M486.7 501.7 H489.2 V503.9 H491.7 V506.1 H494.2 V508.3 H496.7 V510.5 H499.2 V512.7" stroke="#111" stroke-width="1.1" fill="none" /><path d="M499.4 512.8 V514.9 H496.9 V517.0 H494.4 V519.1 H491.9 V521.2 H489.4 V523.3 H486.9" stroke="#111" stroke-width="1.1" fill="none" /><line x1="486.70" y1="487.80" x2="499.40" y2="495.40" stroke="#aaa" stroke-width="0.6" /><line x1="486.70" y1="489.60" x2="499.40" y2="497.20" stroke="#aaa" stroke-width="0.6" /><line x1="486.70" y1="491.40" x2="499.40" y2="499.00" stroke="#aaa" stroke-width="0.6" /><line x1="486.70" y1="493.20" x2="499.40" y2="500.80" stroke="#aaa" stroke-width="0.6" /><line x1="486.70" y1="495.00" x2="499.40" y2="502.60" stroke="#aaa" stroke-width="0.6" /><path d="M485.5 527.2L503.3 514.4M485.5 525.6L502 514.4" stroke="#999" stroke-width="0.7" fill="none" /><rect x="500.80" y="481.60" width="13.40" height="31.40" stroke="#111" stroke-width="1.2" fill="#fff" /><rect x="500.00" y="480.90" width="2.20" height="32.10" fill="#111"/><rect x="500.00" y="480.90" width="14.20" height="1.70" fill="#111"/><rect x="517.90" y="481.60" width="13.40" height="31.40" stroke="#111" stroke-width="1.2" fill="#fff" /><rect x="517.20" y="480.90" width="2.80" height="32.10" fill="#111"/><rect x="517.20" y="480.90" width="14.50" height="1.70" fill="#111"/><rect x="530.00" y="480.90" width="1.70" height="32.10" fill="#111"/><path d="M502.5 483.4L513 512.0M513 483.4L502.5 512.0" stroke="#aaa" stroke-width="0.5" fill="none" /><path d="M520.5 483.4L530 512.0M530 483.4L520.5 512.0" stroke="#aaa" stroke-width="0.5" fill="none" /><line x1="499.40" y1="513.30" x2="540.00" y2="513.30" stroke="#444" stroke-width="1.2" /><line x1="499.40" y1="515.50" x2="540.00" y2="515.50" stroke="#777" stroke-width="1.0" /><rect x="539.40" y="479.40" width="2.30" height="33.60" fill="#666"/><rect x="570.00" y="480.40" width="44.50" height="32.60" stroke="#333" stroke-width="1.3" fill="none" /><rect x="570.00" y="480.90" width="2.50" height="32.10" fill="#111"/><rect x="570.00" y="480.90" width="14.00" height="1.70" fill="#111"/><rect x="570.80" y="481.90" width="13.20" height="31.10" stroke="#111" stroke-width="1.1" fill="none" /><rect x="600.00" y="480.90" width="2.50" height="32.10" fill="#111"/><rect x="600.00" y="480.90" width="14.00" height="1.70" fill="#111"/><rect x="600.80" y="481.90" width="12.70" height="31.10" stroke="#111" stroke-width="1.1" fill="none" /><path d="M573 483.4L583.5 512.0M583.5 483.4L573 512.0" stroke="#aaa" stroke-width="0.5" fill="none" /><path d="M603 483.4L613 512.0M613 483.4L603 512.0" stroke="#aaa" stroke-width="0.5" fill="none" /><line x1="589.40" y1="479.40" x2="589.40" y2="513.00" stroke="#222" stroke-width="1" /><line x1="596.50" y1="479.40" x2="596.50" y2="513.00" stroke="#222" stroke-width="1" /><text x="603" y="510.0" font-family="Liberation Sans" font-size="3" fill="#999" >113.80</text><rect x="407.60" y="515.60" width="59.10" height="36.90" stroke="#555" stroke-width="1.5" fill="none" /><line x1="436.80" y1="515.60" x2="436.80" y2="552.50" stroke="#888" stroke-width="1.6" /><line x1="441.40" y1="515.60" x2="441.40" y2="552.50" stroke="#111" stroke-width="1.2" /><line x1="470.50" y1="528.50" x2="485.50" y2="528.50" stroke="#111" stroke-width="1.0" /><line x1="470.50" y1="530.50" x2="485.50" y2="530.50" stroke="#111" stroke-width="1.0" /><line x1="470.50" y1="533.50" x2="485.50" y2="533.50" stroke="#111" stroke-width="1.0" /><line x1="470.50" y1="535.50" x2="485.50" y2="535.50" stroke="#111" stroke-width="1.0" /><line x1="470.50" y1="538.50" x2="485.50" y2="538.50" stroke="#111" stroke-width="1.0" /><line x1="470.50" y1="540.50" x2="485.50" y2="540.50" stroke="#111" stroke-width="1.0" /><line x1="486.00" y1="527.60" x2="486.00" y2="542.60" stroke="#111" stroke-width="1.6" /><rect x="470.50" y="541.50" width="15.00" height="24.70" stroke="#222" stroke-width="1.1" fill="none" /><path d="M486.7 537.9 H489.2 V540.1 H491.7 V542.3 H494.2 V544.5 H496.7 V546.7 H499.2 V548.9" stroke="#111" stroke-width="1.1" fill="none" /><path d="M499.4 549.0 V551.1 H496.9 V553.2 H494.4 V555.3 H491.9 V557.4 H489.4 V559.5 H486.9" stroke="#111" stroke-width="1.1" fill="none" /><line x1="486.70" y1="524.00" x2="499.40" y2="531.60" stroke="#aaa" stroke-width="0.6" /><line x1="486.70" y1="525.80" x2="499.40" y2="533.40" stroke="#aaa" stroke-width="0.6" /><line x1="486.70" y1="527.60" x2="499.40" y2="535.20" stroke="#aaa" stroke-width="0.6" /><line x1="486.70" y1="529.40" x2="499.40" y2="537.00" stroke="#aaa" stroke-width="0.6" /><line x1="486.70" y1="531.20" x2="499.40" y2="538.80" stroke="#aaa" stroke-width="0.6" /><path d="M485.5 566.7L503.3 553.9M485.5 565.1L502 553.9" stroke="#999" stroke-width="0.7" fill="none" /><rect x="500.80" y="517.80" width="13.40" height="34.70" stroke="#111" stroke-width="1.2" fill="#fff" /><rect x="500.00" y="517.10" width="2.20" height="35.40" fill="#111"/><rect x="500.00" y="517.10" width="14.20" height="1.70" fill="#111"/><rect x="517.90" y="517.80" width="13.40" height="34.70" stroke="#111" stroke-width="1.2" fill="#fff" /><rect x="517.20" y="517.10" width="2.80" height="35.40" fill="#111"/><rect x="517.20" y="517.10" width="14.50" height="1.70" fill="#111"/><rect x="530.00" y="517.10" width="1.70" height="35.40" fill="#111"/><path d="M502.5 519.6L513 551.5M513 519.6L502.5 551.5" stroke="#aaa" stroke-width="0.5" fill="none" /><path d="M520.5 519.6L530 551.5M530 519.6L520.5 551.5" stroke="#aaa" stroke-width="0.5" fill="none" /><line x1="499.40" y1="552.80" x2="540.00" y2="552.80" stroke="#444" stroke-width="1.2" /><line x1="499.40" y1="555.00" x2="540.00" y2="555.00" stroke="#777" stroke-width="1.0" /><rect x="539.40" y="515.60" width="2.30" height="36.90" fill="#666"/><rect x="570.00" y="516.60" width="44.50" height="35.90" stroke="#333" stroke-width="1.3" fill="none" /><rect x="570.00" y="517.10" width="2.50" height="35.40" fill="#111"/><rect x="570.00" y="517.10" width="14.00" height="1.70" fill="#111"/><rect x="570.80" y="518.10" width="13.20" height="34.40" stroke="#111" stroke-width="1.1" fill="none" /><rect x="600.00" y="517.10" width="2.50" height="35.40" fill="#111"/><rect x="600.00" y="517.10" width="14.00" height="1.70" fill="#111"/><rect x="600.80" y="518.10" width="12.70" height="34.40" stroke="#111" stroke-width="1.1" fill="none" /><path d="M573 519.6L583.5 551.5M583.5 519.6L573 551.5" stroke="#aaa" stroke-width="0.5" fill="none" /><path d="M603 519.6L613 551.5M613 519.6L603 551.5" stroke="#aaa" stroke-width="0.5" fill="none" /><line x1="589.40" y1="515.60" x2="589.40" y2="552.50" stroke="#222" stroke-width="1" /><line x1="596.50" y1="515.60" x2="596.50" y2="552.50" stroke="#222" stroke-width="1" /><text x="603" y="549.5" font-family="Liberation Sans" font-size="3" fill="#999" >113.80</text><rect x="408.40" y="556.30" width="58.30" height="35.70" stroke="#555" stroke-width="1.5" fill="none" /><line x1="436.80" y1="556.30" x2="436.80" y2="592.00" stroke="#888" stroke-width="1.6" /><line x1="441.40" y1="556.30" x2="441.40" y2="592.00" stroke="#111" stroke-width="1.2" /><line x1="470.50" y1="569.50" x2="485.50" y2="569.50" stroke="#111" stroke-width="1.0" /><line x1="470.50" y1="571.50" x2="485.50" y2="571.50" stroke="#111" stroke-width="1.0" /><line x1="470.50" y1="574.50" x2="485.50" y2="574.50" stroke="#111" stroke-width="1.0" /><line x1="470.50" y1="576.50" x2="485.50" y2="576.50" stroke="#111" stroke-width="1.0" /><line x1="470.50" y1="579.50" x2="485.50" y2="579.50" stroke="#111" stroke-width="1.0" /><line x1="470.50" y1="581.50" x2="485.50" y2="581.50" stroke="#111" stroke-width="1.0" /><line x1="486.00" y1="568.30" x2="486.00" y2="583.30" stroke="#111" stroke-width="1.6" /><rect x="470.50" y="581.00" width="15.00" height="11.00" stroke="#222" stroke-width="1.1" fill="none" /><path d="M486.7 578.5999999999999 H489.2 V580.8 H491.7 V583.0 H494.2 V585.2 H496.7 V587.4 H499.2 V589.6" stroke="#111" stroke-width="1.1" fill="none" /><path d="M499.4 589.6999999999999 V591.8 H496.9 V593.9 H494.4 V596.0 H491.9 V598.1 H489.4 V600.2 H486.9" stroke="#111" stroke-width="1.1" fill="none" /><line x1="486.70" y1="564.70" x2="499.40" y2="572.30" stroke="#aaa" stroke-width="0.6" /><line x1="486.70" y1="566.50" x2="499.40" y2="574.10" stroke="#aaa" stroke-width="0.6" /><line x1="486.70" y1="568.30" x2="499.40" y2="575.90" stroke="#aaa" stroke-width="0.6" /><line x1="486.70" y1="570.10" x2="499.40" y2="577.70" stroke="#aaa" stroke-width="0.6" /><line x1="486.70" y1="571.90" x2="499.40" y2="579.50" stroke="#aaa" stroke-width="0.6" /><rect x="500.80" y="558.50" width="13.40" height="33.50" stroke="#111" stroke-width="1.2" fill="#fff" /><rect x="500.00" y="557.80" width="2.20" height="34.20" fill="#111"/><rect x="500.00" y="557.80" width="14.20" height="1.70" fill="#111"/><rect x="517.90" y="558.50" width="13.40" height="33.50" stroke="#111" stroke-width="1.2" fill="#fff" /><rect x="517.20" y="557.80" width="2.80" height="34.20" fill="#111"/><rect x="517.20" y="557.80" width="14.50" height="1.70" fill="#111"/><rect x="530.00" y="557.80" width="1.70" height="34.20" fill="#111"/><path d="M502.5 560.3L513 591.0M513 560.3L502.5 591.0" stroke="#aaa" stroke-width="0.5" fill="none" /><path d="M520.5 560.3L530 591.0M530 560.3L520.5 591.0" stroke="#aaa" stroke-width="0.5" fill="none" /><line x1="499.40" y1="592.30" x2="540.00" y2="592.30" stroke="#444" stroke-width="1.2" /><line x1="499.40" y1="594.50" x2="540.00" y2="594.50" stroke="#777" stroke-width="1.0" /><rect x="539.40" y="556.30" width="2.30" height="35.70" fill="#666"/><rect x="570.00" y="557.30" width="44.50" height="34.70" stroke="#333" stroke-width="1.3" fill="none" /><rect x="570.00" y="557.80" width="2.50" height="34.20" fill="#111"/><rect x="570.00" y="557.80" width="14.00" height="1.70" fill="#111"/><rect x="570.80" y="558.80" width="13.20" height="33.20" stroke="#111" stroke-width="1.1" fill="none" /><rect x="600.00" y="557.80" width="2.50" height="34.20" fill="#111"/><rect x="600.00" y="557.80" width="14.00" height="1.70" fill="#111"/><rect x="600.80" y="558.80" width="12.70" height="33.20" stroke="#111" stroke-width="1.1" fill="none" /><path d="M573 560.3L583.5 591.0M583.5 560.3L573 591.0" stroke="#aaa" stroke-width="0.5" fill="none" /><path d="M603 560.3L613 591.0M613 560.3L603 591.0" stroke="#aaa" stroke-width="0.5" fill="none" /><line x1="589.40" y1="556.30" x2="589.40" y2="592.00" stroke="#222" stroke-width="1" /><line x1="596.50" y1="556.30" x2="596.50" y2="592.00" stroke="#222" stroke-width="1" /><text x="603" y="589.0" font-family="Liberation Sans" font-size="3" fill="#999" >113.80</text><path d="M443.5 501.0L446 492.0Q453.5 489.7 461 492.0L463.5 501.0" stroke="#999" stroke-width="0.9" fill="none" /><path d="M445 498.0H462M443 501.0H464" stroke="#b0b0b0" stroke-width="0.8" fill="none" /><path d="M443 501.0V505.5M464 501.0V505.5" stroke="#bbb" stroke-width="0.7" fill="none" /><rect x="447.00" y="502.00" width="13.00" height="2.50" fill="#333"/><rect x="449.50" y="505.30" width="8.00" height="1.00" fill="#666"/><rect x="443.50" y="506.50" width="20.00" height="3.50" fill="#2a2a2a"/><rect x="442.50" y="505.50" width="3.00" height="1.50" fill="#444"/><rect x="461.50" y="505.50" width="3.00" height="1.50" fill="#444"/><path d="M443.5 541.5L446 532.5Q453.5 530.2 461 532.5L463.5 541.5" stroke="#999" stroke-width="0.9" fill="none" /><path d="M445 538.5H462M443 541.5H464" stroke="#b0b0b0" stroke-width="0.8" fill="none" /><path d="M443 541.5V546M464 541.5V546" stroke="#bbb" stroke-width="0.7" fill="none" /><rect x="447.00" y="542.50" width="13.00" height="2.50" fill="#333"/><rect x="449.50" y="545.80" width="8.00" height="1.00" fill="#666"/><rect x="443.50" y="547.00" width="20.00" height="3.50" fill="#2a2a2a"/><rect x="442.50" y="546.00" width="3.00" height="1.50" fill="#444"/><rect x="461.50" y="546.00" width="3.00" height="1.50" fill="#444"/><path d="M412.0 580.0L414.5 571.0Q422.0 568.7 429.5 571.0L432.0 580.0" stroke="#999" stroke-width="0.9" fill="none" /><path d="M413.5 577.0H430.5M411.5 580.0H432.5" stroke="#b0b0b0" stroke-width="0.8" fill="none" /><path d="M411.5 580.0V584.5M432.5 580.0V584.5" stroke="#bbb" stroke-width="0.7" fill="none" /><rect x="415.50" y="581.00" width="13.00" height="2.50" fill="#333"/><rect x="418.00" y="584.30" width="8.00" height="1.00" fill="#666"/><rect x="412.00" y="585.50" width="20.00" height="3.50" fill="#2a2a2a"/><rect x="411.00" y="584.50" width="3.00" height="1.50" fill="#444"/><rect x="430.00" y="584.50" width="3.00" height="1.50" fill="#444"/><rect x="414.50" y="580.50" width="15.00" height="9.00" fill="#4a4a4a"/><rect x="412.50" y="572.50" width="4.00" height="4.00" fill="#777"/><line x1="580.00" y1="146.60" x2="616.00" y2="146.60" stroke="#111" stroke-width="1.6" /><line x1="580.00" y1="149.40" x2="616.00" y2="149.40" stroke="#111" stroke-width="1.6" /><line x1="589.80" y1="140.00" x2="589.80" y2="185.00" stroke="#111" stroke-width="1.4" /><line x1="600.60" y1="149.00" x2="600.60" y2="185.00" stroke="#888" stroke-width="2" /><line x1="609.00" y1="145.00" x2="609.00" y2="185.00" stroke="#111" stroke-width="1.4" /><path d="M580 185V171.5H643V187" stroke="#333" stroke-width="1.3" fill="none" /><line x1="615.60" y1="171.50" x2="615.60" y2="185.00" stroke="#555" stroke-width="1.0" /><line x1="627.30" y1="170.00" x2="627.30" y2="185.00" stroke="#111" stroke-width="1.5" /><text x="594" y="165" font-family="Liberation Sans" font-size="3" fill="#999" transform="rotate(-90 594 165)">2.90</text><text x="606" y="162" font-family="Liberation Sans" font-size="3" fill="#999" transform="rotate(-90 606 162)">1.00</text><rect x="604.00" y="166.00" width="2.00" height="2.00" fill="#222"/><line x1="569.00" y1="184.70" x2="645.00" y2="184.70" stroke="#222" stroke-width="1.0" /><line x1="569.00" y1="187.00" x2="645.00" y2="187.00" stroke="#111" stroke-width="1.6" /><rect x="643.00" y="185.00" width="3.00" height="5.50" fill="#555"/><text x="591" y="183" font-family="Liberation Sans" font-size="3.5" fill="#999" >128.2</text><rect x="570.00" y="189.70" width="68.60" height="39.40" stroke="#222" stroke-width="1.5" fill="none" /><line x1="570.00" y1="228.60" x2="638.60" y2="228.60" stroke="#111" stroke-width="2" /><line x1="577.60" y1="189.70" x2="577.60" y2="229.10" stroke="#111" stroke-width="2" /><line x1="589.40" y1="189.70" x2="589.40" y2="229.10" stroke="#222" stroke-width="1" /><line x1="596.40" y1="189.70" x2="596.40" y2="229.10" stroke="#333" stroke-width="1" /><line x1="600.60" y1="189.70" x2="600.60" y2="229.10" stroke="#444" stroke-width="1" /><line x1="612.80" y1="189.70" x2="612.80" y2="229.10" stroke="#111" stroke-width="1.8" /><line x1="629.20" y1="189.70" x2="629.20" y2="229.10" stroke="#111" stroke-width="2" /><line x1="583.30" y1="192.70" x2="583.30" y2="201.70" stroke="#333" stroke-width="2" /><line x1="583.30" y1="209.70" x2="583.30" y2="223.70" stroke="#444" stroke-width="1.4" /><line x1="577.60" y1="207.50" x2="629.00" y2="207.50" stroke="#111" stroke-width="1.6" /><line x1="577.60" y1="216.20" x2="629.00" y2="216.20" stroke="#111" stroke-width="1.5" /><rect x="618.00" y="198.70" width="11.20" height="30.40" stroke="#111" stroke-width="2" fill="none" /><rect x="642.00" y="213.70" width="3.00" height="15.40" fill="#111"/><text x="595" y="225.1" font-family="Liberation Sans" font-size="3.5" fill="#999" >128.2</text><rect x="570.00" y="234.30" width="68.60" height="39.40" stroke="#222" stroke-width="1.5" fill="none" /><line x1="570.00" y1="273.20" x2="638.60" y2="273.20" stroke="#111" stroke-width="2" /><line x1="577.60" y1="234.30" x2="577.60" y2="273.70" stroke="#111" stroke-width="2" /><line x1="589.40" y1="234.30" x2="589.40" y2="273.70" stroke="#222" stroke-width="1" /><line x1="596.40" y1="234.30" x2="596.40" y2="273.70" stroke="#333" stroke-width="1" /><line x1="600.60" y1="234.30" x2="600.60" y2="273.70" stroke="#444" stroke-width="1" /><line x1="612.80" y1="234.30" x2="612.80" y2="273.70" stroke="#111" stroke-width="1.8" /><line x1="629.20" y1="234.30" x2="629.20" y2="273.70" stroke="#111" stroke-width="2" /><line x1="583.30" y1="237.30" x2="583.30" y2="246.30" stroke="#333" stroke-width="2" /><line x1="583.30" y1="254.30" x2="583.30" y2="268.30" stroke="#444" stroke-width="1.4" /><line x1="577.60" y1="252.10" x2="629.00" y2="252.10" stroke="#111" stroke-width="1.6" /><line x1="577.60" y1="260.80" x2="629.00" y2="260.80" stroke="#111" stroke-width="1.5" /><rect x="618.00" y="243.30" width="11.20" height="30.40" stroke="#111" stroke-width="2" fill="none" /><rect x="642.00" y="258.30" width="3.00" height="15.40" fill="#111"/><text x="595" y="269.7" font-family="Liberation Sans" font-size="3.5" fill="#999" >128.2</text><rect x="570.00" y="278.80" width="68.60" height="39.40" stroke="#222" stroke-width="1.5" fill="none" /><line x1="570.00" y1="317.70" x2="638.60" y2="317.70" stroke="#111" stroke-width="2" /><line x1="577.60" y1="278.80" x2="577.60" y2="318.20" stroke="#111" stroke-width="2" /><line x1="589.40" y1="278.80" x2="589.40" y2="318.20" stroke="#222" stroke-width="1" /><line x1="596.40" y1="278.80" x2="596.40" y2="318.20" stroke="#333" stroke-width="1" /><line x1="600.60" y1="278.80" x2="600.60" y2="318.20" stroke="#444" stroke-width="1" /><line x1="612.80" y1="278.80" x2="612.80" y2="318.20" stroke="#111" stroke-width="1.8" /><line x1="629.20" y1="278.80" x2="629.20" y2="318.20" stroke="#111" stroke-width="2" /><line x1="583.30" y1="281.80" x2="583.30" y2="290.80" stroke="#333" stroke-width="2" /><line x1="583.30" y1="298.80" x2="583.30" y2="312.80" stroke="#444" stroke-width="1.4" /><line x1="577.60" y1="296.60" x2="629.00" y2="296.60" stroke="#111" stroke-width="1.6" /><line x1="577.60" y1="305.30" x2="629.00" y2="305.30" stroke="#111" stroke-width="1.5" /><rect x="618.00" y="287.80" width="11.20" height="30.40" stroke="#111" stroke-width="2" fill="none" /><rect x="642.00" y="302.80" width="3.00" height="15.40" fill="#111"/><text x="595" y="314.2" font-family="Liberation Sans" font-size="3.5" fill="#999" >128.2</text><rect x="570.00" y="323.30" width="68.60" height="39.40" stroke="#222" stroke-width="1.5" fill="none" /><line x1="570.00" y1="362.20" x2="638.60" y2="362.20" stroke="#111" stroke-width="2" /><line x1="577.60" y1="323.30" x2="577.60" y2="362.70" stroke="#111" stroke-width="2" /><line x1="589.40" y1="323.30" x2="589.40" y2="362.70" stroke="#222" stroke-width="1" /><line x1="596.40" y1="323.30" x2="596.40" y2="362.70" stroke="#333" stroke-width="1" /><line x1="600.60" y1="323.30" x2="600.60" y2="362.70" stroke="#444" stroke-width="1" /><line x1="612.80" y1="323.30" x2="612.80" y2="362.70" stroke="#111" stroke-width="1.8" /><line x1="629.20" y1="323.30" x2="629.20" y2="362.70" stroke="#111" stroke-width="2" /><line x1="583.30" y1="326.30" x2="583.30" y2="335.30" stroke="#333" stroke-width="2" /><line x1="583.30" y1="343.30" x2="583.30" y2="357.30" stroke="#444" stroke-width="1.4" /><line x1="577.60" y1="341.10" x2="629.00" y2="341.10" stroke="#111" stroke-width="1.6" /><line x1="577.60" y1="349.80" x2="629.00" y2="349.80" stroke="#111" stroke-width="1.5" /><rect x="618.00" y="332.30" width="11.20" height="30.40" stroke="#111" stroke-width="2" fill="none" /><rect x="642.00" y="347.30" width="3.00" height="15.40" fill="#111"/><text x="595" y="358.7" font-family="Liberation Sans" font-size="3.5" fill="#999" >128.2</text><line x1="641.80" y1="185.00" x2="641.80" y2="367.50" stroke="#111" stroke-width="1.1" /><line x1="570.00" y1="363.30" x2="641.70" y2="363.30" stroke="#222" stroke-width="1.3" /><rect x="570.00" y="368.20" width="43.30" height="39.40" stroke="#222" stroke-width="1.5" fill="none" /><line x1="577.60" y1="368.20" x2="577.60" y2="407.60" stroke="#111" stroke-width="2" /><line x1="589.40" y1="368.20" x2="589.40" y2="407.60" stroke="#222" stroke-width="1" /><line x1="596.40" y1="368.20" x2="596.40" y2="407.60" stroke="#222" stroke-width="1" /><line x1="601.00" y1="368.20" x2="601.00" y2="407.60" stroke="#888" stroke-width="2" /><line x1="604.60" y1="368.20" x2="604.60" y2="407.60" stroke="#333" stroke-width="1" /><line x1="577.60" y1="385.20" x2="613.00" y2="385.20" stroke="#111" stroke-width="1.5" /><line x1="577.60" y1="394.20" x2="613.00" y2="394.20" stroke="#777" stroke-width="1" /><line x1="570.00" y1="407.10" x2="613.30" y2="407.10" stroke="#111" stroke-width="2" /><line x1="617.50" y1="368.00" x2="617.50" y2="452.50" stroke="#111" stroke-width="1.3" /><rect x="615.00" y="377.00" width="3.00" height="16.00" fill="#111"/><path d="M570 408.3H629.2V412.5H617.5" stroke="#222" stroke-width="1.3" fill="none" /><line x1="570.00" y1="408.30" x2="570.00" y2="412.50" stroke="#222" stroke-width="1.3" /><rect x="570.00" y="412.50" width="43.30" height="45.00" stroke="#222" stroke-width="1.3" fill="none" /><line x1="613.80" y1="412.00" x2="613.80" y2="452.50" stroke="#222" stroke-width="1.1" /><rect x="614.50" y="412.00" width="2.50" height="40.50" fill="#fff"/><line x1="589.20" y1="412.50" x2="589.20" y2="600.00" stroke="#222" stroke-width="1.0" /><path d="M583.3 460V442.5H595V452.5H600" stroke="#111" stroke-width="1.2" fill="none" /><path d="M585 460H597V455H612" stroke="#333" stroke-width="1.0" fill="none" /><rect x="591.70" y="452.50" width="25.00" height="6.00" stroke="#333" stroke-width="1.1" fill="none" /><line x1="601.00" y1="412.50" x2="601.00" y2="457.50" stroke="#444" stroke-width="1.2" /><rect x="617.80" y="452.50" width="5.70" height="148.50" fill="#7a7a7a"/><rect x="330.00" y="595.30" width="207.80" height="6.10" fill="#7a7a7a"/><rect x="531.20" y="595.30" width="6.60" height="22.00" fill="#7a7a7a"/><rect x="531.20" y="611.20" width="45.00" height="6.10" fill="#7a7a7a"/><rect x="570.60" y="595.30" width="5.60" height="22.00" fill="#7a7a7a"/><rect x="570.60" y="595.30" width="53.00" height="5.90" fill="#7a7a7a"/><line x1="402.00" y1="595.50" x2="537.00" y2="595.50" stroke="#222" stroke-width="1" /><line x1="537.80" y1="611.30" x2="570.60" y2="611.30" stroke="#111" stroke-width="1.3" /><path d="M618 452.5L647 456L719.5 457.8L778 456.6L839 457.4V456H891V462.5L844.5 464L778 462.6L719.5 464.5L647 461.5L623.5 459Z" stroke="#7a7a7a" stroke-width="0" fill="#7a7a7a" /><rect x="646.60" y="445.30" width="73.10" height="11.30" stroke="#222" stroke-width="1" fill="#fff" /><line x1="646.60" y1="445.30" x2="719.70" y2="445.30" stroke="#111" stroke-width="2" /><line x1="719.70" y1="427.00" x2="719.70" y2="456.60" stroke="#444" stroke-width="1.2" /><path d="M655 445C654.5 441 656 438.5 659 437.5L664 433C667 431.5 679 431 685 433.2L694 438C701 439 708 440.5 711 445" stroke="#777" stroke-width="0.8" fill="none" /><path d="M658 438.5H694M666 433.5V444.5M676 432V444.5M684.5 433.5V444.5" stroke="#999" stroke-width="0.6" fill="none" /><circle cx="663.5" cy="451" r="4.2" fill="#fff" stroke="#555" stroke-width="1"/><circle cx="663.5" cy="451" r="2.2" fill="none" stroke="#777" stroke-width="0.8"/><circle cx="701" cy="451" r="4.2" fill="#fff" stroke="#555" stroke-width="1"/><circle cx="701" cy="451" r="2.2" fill="none" stroke="#777" stroke-width="0.8"/><path d="M650 448H716M690 452L700 455" stroke="#999" stroke-width="0.6" fill="none" /><rect x="706.00" y="446.00" width="4.00" height="3.00" fill="#444"/><line x1="672.00" y1="458.40" x2="688.00" y2="458.40" stroke="#222" stroke-width="1.6" /><rect x="691.00" y="455.50" width="1.50" height="3.50" fill="#222"/><path d="M717.3 390V410C717.3 416 700 419 671 423C650 425 630 425 618 424.5" stroke="#888" stroke-width="0.9" fill="none" /><line x1="717.30" y1="390.00" x2="717.30" y2="411.60" stroke="#333" stroke-width="1.2" /><path d="M618 426.5H712C716 426.5 719.5 427.5 719.7 430" stroke="#bdbdbd" stroke-width="1.1" fill="none" /><line x1="819.50" y1="390.00" x2="819.50" y2="414.60" stroke="#333" stroke-width="1.2" /><path d="M819.5 414.6C830 418 860 423 891 424.5C860 425 830 427 828 432C826 437 835 440 850 443L870 448C880 445 885 443 891 442M840 455L891 443" stroke="#aaa" stroke-width="0.8" fill="none" /><rect x="833.00" y="440.00" width="2.00" height="3.00" fill="#222"/><path d="M763 419L771 411L779 419L787 411L795 419M771 427L787 411M771 411L787 427" stroke="#aaa" stroke-width="0.7" fill="none" /><line x1="779.00" y1="405.00" x2="779.00" y2="471.00" stroke="#888" stroke-width="1.4" stroke-dasharray="6 2 1.5 2"/><line x1="671.80" y1="184.70" x2="687.70" y2="184.70" stroke="#555" stroke-width="1.5" /><path d="M677 183.89999999999998L680 181.2L683 183.89999999999998" stroke="#999" stroke-width="0.5" fill="none" /><text x="675" y="181.2" font-family="Liberation Sans" font-size="3.6" fill="#aaa" >129.20</text><text x="690" y="185.7" font-family="Liberation Sans" font-size="4.2" fill="#777" textLength="30" lengthAdjust="spacingAndGlyphs">PISO 5 (COBERTURA)</text><rect x="709.00" y="181.70" width="1.50" height="4.00" fill="#222"/><rect x="712.50" y="181.70" width="1.50" height="4.00" fill="#333"/><rect x="690.50" y="181.70" width="1.50" height="4.00" fill="#333"/><line x1="671.80" y1="228.80" x2="687.70" y2="228.80" stroke="#555" stroke-width="1.5" /><path d="M677 228.0L680 225.3L683 228.0" stroke="#999" stroke-width="0.5" fill="none" /><text x="675" y="225.3" font-family="Liberation Sans" font-size="3.6" fill="#aaa" >129.20</text><text x="690" y="229.8" font-family="Liberation Sans" font-size="4.2" fill="#888" textLength="8" lengthAdjust="spacingAndGlyphs">PISO</text><rect x="691.00" y="226.30" width="1.50" height="3.00" fill="#333"/><rect x="699.00" y="226.80" width="1.00" height="2.50" fill="#666"/><line x1="671.80" y1="273.40" x2="687.70" y2="273.40" stroke="#555" stroke-width="1.5" /><path d="M677 272.59999999999997L680 269.9L683 272.59999999999997" stroke="#999" stroke-width="0.5" fill="none" /><text x="675" y="269.9" font-family="Liberation Sans" font-size="3.6" fill="#aaa" >129.20</text><text x="690" y="274.4" font-family="Liberation Sans" font-size="4.2" fill="#888" textLength="8" lengthAdjust="spacingAndGlyphs">PISO</text><rect x="691.00" y="270.90" width="1.50" height="3.00" fill="#333"/><rect x="699.00" y="271.40" width="1.00" height="2.50" fill="#666"/><line x1="671.80" y1="318.70" x2="687.70" y2="318.70" stroke="#555" stroke-width="1.5" /><path d="M677 317.9L680 315.2L683 317.9" stroke="#999" stroke-width="0.5" fill="none" /><text x="675" y="315.2" font-family="Liberation Sans" font-size="3.6" fill="#aaa" >129.20</text><text x="690" y="319.7" font-family="Liberation Sans" font-size="4.2" fill="#888" textLength="8" lengthAdjust="spacingAndGlyphs">PISO</text><rect x="691.00" y="316.20" width="1.50" height="3.00" fill="#333"/><rect x="699.00" y="316.70" width="1.00" height="2.50" fill="#666"/><line x1="671.80" y1="363.00" x2="687.70" y2="363.00" stroke="#555" stroke-width="1.5" /><path d="M677 362.2L680 359.5L683 362.2" stroke="#999" stroke-width="0.5" fill="none" /><text x="675" y="359.5" font-family="Liberation Sans" font-size="3.6" fill="#aaa" >129.20</text><text x="690" y="364" font-family="Liberation Sans" font-size="4.2" fill="#888" textLength="8" lengthAdjust="spacingAndGlyphs">PISO</text><rect x="691.00" y="360.50" width="1.50" height="3.00" fill="#333"/><rect x="699.00" y="361.00" width="1.00" height="2.50" fill="#666"/><line x1="671.80" y1="408.00" x2="687.70" y2="408.00" stroke="#555" stroke-width="1.5" /><path d="M677 407.2L680 404.5L683 407.2" stroke="#999" stroke-width="0.5" fill="none" /><text x="675" y="404.5" font-family="Liberation Sans" font-size="3.6" fill="#aaa" >129.20</text><text x="690" y="409" font-family="Liberation Sans" font-size="4.2" fill="#888" textLength="8" lengthAdjust="spacingAndGlyphs">PISO</text><rect x="691.00" y="405.50" width="1.50" height="3.00" fill="#333"/><rect x="699.00" y="406.00" width="1.00" height="2.50" fill="#666"/><line x1="671.80" y1="513.10" x2="687.70" y2="513.10" stroke="#555" stroke-width="1.5" /><path d="M677 512.3000000000001L680 509.6L683 512.3000000000001" stroke="#999" stroke-width="0.5" fill="none" /><text x="675" y="509.6" font-family="Liberation Sans" font-size="3.6" fill="#aaa" >129.20</text><text x="690" y="514.1" font-family="Liberation Sans" font-size="4.2" fill="#888" textLength="8" lengthAdjust="spacingAndGlyphs">PISO</text><rect x="691.00" y="510.60" width="1.50" height="3.00" fill="#333"/><rect x="698.00" y="511.60" width="4.00" height="1.00" fill="#222"/><line x1="671.80" y1="550.70" x2="687.70" y2="550.70" stroke="#555" stroke-width="1.5" /><path d="M677 549.9000000000001L680 547.2L683 549.9000000000001" stroke="#999" stroke-width="0.5" fill="none" /><text x="675" y="547.2" font-family="Liberation Sans" font-size="3.6" fill="#aaa" >129.20</text><text x="690" y="551.7" font-family="Liberation Sans" font-size="4.2" fill="#888" textLength="8" lengthAdjust="spacingAndGlyphs">PISO</text><rect x="691.00" y="548.20" width="1.50" height="3.00" fill="#333"/><rect x="698.00" y="549.20" width="4.00" height="1.00" fill="#222"/><line x1="671.80" y1="591.30" x2="687.70" y2="591.30" stroke="#555" stroke-width="1.5" /><path d="M677 590.5L680 587.8L683 590.5" stroke="#999" stroke-width="0.5" fill="none" /><text x="675" y="587.8" font-family="Liberation Sans" font-size="3.6" fill="#aaa" >129.20</text><text x="690" y="592.3" font-family="Liberation Sans" font-size="4.2" fill="#888" textLength="8" lengthAdjust="spacingAndGlyphs">PISO</text><rect x="691.00" y="588.80" width="1.50" height="3.00" fill="#333"/><rect x="698.00" y="589.80" width="4.00" height="1.00" fill="#222"/><line x1="502.00" y1="633.00" x2="518.00" y2="633.00" stroke="#666" stroke-width="0.8" stroke-dasharray="1 0.7"/><rect x="504.00" y="632.00" width="1.00" height="2.00" fill="#333"/><text x="276" y="666" font-family="Liberation Sans" font-size="4" fill="#666" textLength="8" lengthAdjust="spacingAndGlyphs">NOTA</text><text x="271" y="674" font-family="Liberation Sans" font-size="5.5" font-weight="bold" textLength="209" lengthAdjust="spacingAndGlyphs" fill="#222">– ESTE EDIF<tspan fill="#555">ICIO</tspan> DESTINA-SE A <tspan fill="#888">SER CONS</tspan>TITUIDO <tspan fill="#666">EM REGIME</tspan> DE <tspan fill="#999">PROPRI</tspan>EDADE HORI<tspan fill="#777">ZONTAL</tspan></text><rect x="777.20" y="605.60" width="86.40" height="50.80" stroke="#111" stroke-width="1.5" fill="none" /><rect x="777.20" y="659.40" width="86.40" height="28.40" stroke="#111" stroke-width="1.5" fill="none" /><path d="M830 612H847V630H826V615Z" fill="#a0a0a0"/><circle cx="829.5" cy="607.5" r="2.6" fill="#b0b0b0"/><path d="M835.5 612V630" stroke="#fff" stroke-width="0.8"/><text x="789" y="642.5" font-family="Liberation Serif" font-size="12.5" fill="#1a1a1a" font-weight="bold" textLength="62" lengthAdjust="spacingAndGlyphs">Ideia Matriz</text><text x="790" y="648.5" font-family="Liberation Sans" font-size="4.5" fill="#222" font-weight="bold" textLength="61" lengthAdjust="spacingAndGlyphs">Arquitectura e Urbanismo</text><rect x="779.00" y="650.50" width="82.00" height="1.20" fill="#999"/><rect x="779.00" y="653.30" width="82.00" height="1.20" fill="#999"/><text x="779" y="668" font-family="Liberation Sans" font-size="5" fill="#333" font-weight="bold" textLength="37" lengthAdjust="spacingAndGlyphs">ELIAS TEIXEIRA</text><text x="779" y="662.8" font-family="Liberation Sans" font-size="3" fill="#777" >ARQUITECTO</text><text x="779" y="685.5" font-family="Liberation Sans" font-size="4.5" fill="#333" textLength="52" lengthAdjust="spacingAndGlyphs">1º IDAL OLIVEIRA ARQ</text><text x="839" y="685.5" font-family="Liberation Sans" font-size="4.5" fill="#aaa" textLength="22" lengthAdjust="spacingAndGlyphs">1975 – 3</text><rect x="866.00" y="605.60" width="172.60" height="8.80" stroke="#111" stroke-width="1.5" fill="none" /><line x1="895.40" y1="605.60" x2="895.40" y2="614.40" stroke="#111" stroke-width="1.2" /><line x1="1009.70" y1="605.60" x2="1009.70" y2="614.40" stroke="#111" stroke-width="1.2" /><rect x="866.00" y="617.00" width="172.60" height="12.60" stroke="#111" stroke-width="1.5" fill="none" /><rect x="866.00" y="632.50" width="172.60" height="14.10" stroke="#111" stroke-width="1.5" fill="none" /><rect x="866.00" y="649.00" width="172.60" height="7.60" stroke="#111" stroke-width="1.5" fill="none" /><rect x="866.00" y="659.40" width="139.70" height="18.20" stroke="#111" stroke-width="1.5" fill="none" /><rect x="866.00" y="680.00" width="139.70" height="7.60" stroke="#111" stroke-width="1.5" fill="none" /><line x1="902.00" y1="680.00" x2="902.00" y2="687.60" stroke="#111" stroke-width="1.2" /><line x1="938.50" y1="680.00" x2="938.50" y2="687.60" stroke="#111" stroke-width="1.2" /><line x1="979.00" y1="680.00" x2="979.00" y2="687.60" stroke="#111" stroke-width="1.2" /><rect x="1009.40" y="659.40" width="29.20" height="28.20" stroke="#111" stroke-width="1.5" fill="none" /><text x="868" y="610.5" font-family="Liberation Sans" font-size="3.5" fill="#333" >OBRA</text><text x="870" y="621.5" font-family="Liberation Sans" font-size="3.5" fill="#222" >REQUERENTE</text><text x="868" y="637" font-family="Liberation Sans" font-size="3" fill="#666" >LOCAL</text><text x="868" y="654" font-family="Liberation Sans" font-size="3" fill="#333" >ESP</text><text x="868" y="664" font-family="Liberation Sans" font-size="3" fill="#333" >DES</text><text x="1012" y="611" font-family="Liberation Sans" font-size="3" fill="#333" >N.º</text><text x="950" y="624" font-family="Liberation Sans" font-size="6" fill="#555" text-anchor="middle" textLength="55" lengthAdjust="spacingAndGlyphs">J. DIAS &amp; DIAS, S.A.</text><text x="950" y="628.7" font-family="Liberation Sans" font-size="4" fill="#333" text-anchor="middle" textLength="95" lengthAdjust="spacingAndGlyphs">AV. DR. FRANCISCO SA CARNEIRO, Nº5, 1ºD, OEIRAS</text><text x="951" y="639.5" font-family="Liberation Sans" font-size="6.5" fill="#444" text-anchor="middle" textLength="90" lengthAdjust="spacingAndGlyphs">AVENIDA ELIAS GARCIA – LOTE 9</text><text x="955" y="645" font-family="Liberation Sans" font-size="5" fill="#555" text-anchor="middle" textLength="19" lengthAdjust="spacingAndGlyphs">AMADORA</text><text x="951" y="655.5" font-family="Liberation Sans" font-size="5" fill="#444" text-anchor="middle" textLength="31" lengthAdjust="spacingAndGlyphs">ARQUITECTURA</text><text x="935.5" y="671.5" font-family="Liberation Sans" font-size="7" fill="#555" text-anchor="middle" textLength="26" lengthAdjust="spacingAndGlyphs">CORTE AA</text><text x="868" y="686.3" font-family="Liberation Sans" font-size="3.5" fill="#333" >ESCALA</text><text x="904" y="686.3" font-family="Liberation Sans" font-size="3.5" fill="#333" >DATA</text><text x="924" y="686.3" font-family="Liberation Sans" font-size="3.5" fill="#777" >MAR/2020</text><text x="940" y="686.3" font-family="Liberation Sans" font-size="3.5" fill="#222" >Desenho</text><text x="964" y="686.3" font-family="Liberation Sans" font-size="3.5" fill="#999" >1/100</text><text x="981" y="686.3" font-family="Liberation Sans" font-size="3.5" fill="#555" >FOLHA</text><text x="1023.5" y="678.5" font-family="Liberation Sans" font-size="15" fill="#b4b4b4" text-anchor="middle" textLength="16" lengthAdjust="spacingAndGlyphs">10</text></svg>
<div class="t" style="left:36px;top:10px;font-size:12px;color:#cfcfcf;letter-spacing:-0.6px">Menu</div>
<div class="t" style="left:147px;top:9px;font-size:14px;color:#e8e8e8;letter-spacing:-0.25px">LOTE 9 - projecto.pdf</div>
<div class="t" style="left:342px;top:10.5px;font-size:12px;color:#d6d6d6;letter-spacing:0.1px">Criar</div>
<div class="t" style="left:1028px;top:8px;font-size:16.3px;color:#f2f2f2">Fazer logon</div>
<div class="t" style="left:14px;top:47px;">Todas as ferramentas</div>
<div class="t" style="left:165px;top:47px;">Editar</div>
<div class="t" style="left:222px;top:47px;">Converter</div>
<div class="t" style="left:303px;top:47px;">Assinar eletronicamente</div>
<div class="t" style="left:635px;top:47px;">Localizar texto ou ferramentas</div>
<div class="abs" style="left:1109px;top:40px;width:155px;height:30px;border-radius:15px;background:linear-gradient(90deg,#f46c4c 0%,#dc6a7e 30%,#a86ec4 60%,#6c72f4 100%)"></div>
<div class="t" style="left:1144px;top:47px;font-weight:bold;color:#fff;font-size:13.6px">Assistente de IA</div>
<div class="abs" style="left:1172px;top:456px;width:65px;height:224px;background:#333;border:1px solid #4a4a4a;border-radius:3px"></div>
<div class="t" style="left:1196px;top:469px;font-size:12px;color:#e6e6e6">36%</div>
<div class="abs" style="left:1180px;top:490px;width:50px;height:1px;background:#4a6aa5"></div>
<div class="abs" style="left:1204px;top:502px;width:1.5px;height:163px;background:#666"></div>
<div class="abs" style="left:1199px;top:618px;width:11px;height:1px;background:#777"></div>
<div class="abs" style="left:1204px;top:667px;width:1.5px;height:6px;background:#666"></div>
<svg style="left:1196px;top:644px" width="17" height="17"><circle cx="8.5" cy="8.5" r="7" fill="#333" stroke="#dcdcdc" stroke-width="1.6"/></svg>
<div class="abs" style="left:1242px;top:426px;width:30px;height:30px;background:#1e1e1e;border:1px solid #555;border-radius:4px"></div>
<div class="t" style="left:1250px;top:432px;font-size:13px;color:#f0f0f0">10</div>
<div class="t" style="left:1251px;top:465px;font-size:13px;color:#e6e6e6">16</div>
<div class="abs" style="left:34px;top:691px;width:241px;height:29px;background:#2f2f2f;border:1px solid #4a4a4a;border-bottom:none"></div>
<div class="t" style="left:71.5px;top:697.5px;font-size:14px;color:#d0d0d0;letter-spacing:-0.7px">Pesquisa</div>
<div class="t" style="left:1245px;top:698px;font-size:12px;color:#f0f0f0;letter-spacing:-0.9px">15:19</div>
<svg style="left:0;top:0" width="1280" height="720"><path d="M15 12.5H28M15 17.5H28M15 22.3H28" stroke="#c4c4c4" stroke-width="1.5" fill="none"/><path d="M86.5 18L94.5 10.3L102.5 18M88.8 16V24.2H92.3V19.8H96.7V24.2H100.2V16" fill="none" stroke="#dedede" stroke-width="1.6" stroke-linecap="round" stroke-linejoin="round"/><polygon points="132.00,10.40 134.00,15.25 139.23,15.65 135.23,19.05 136.47,24.15 132.00,21.40 127.53,24.15 128.77,19.05 124.77,15.65 130.00,15.25" fill="none" stroke="#dedede" stroke-width="1.6" stroke-linecap="round" stroke-linejoin="round"/><path d="M291.2 14L299 21.8M299 14L291.2 21.8" stroke="#dedede" stroke-width="1.9" stroke-linecap="round"/><rect x="314.5" y="6.5" width="60" height="22" rx="4.5" fill="none" stroke="#7c7c7c" stroke-width="1.2"/><path d="M327.7 13V22M323.2 17.5H332.2" stroke="#e0e0e0" stroke-width="1.8" stroke-linecap="round"/><circle cx="937.5" cy="17" r="6.9" fill="none" stroke="#d6d6d6" stroke-width="1.5"/><path d="M935.2 15.2C935.2 13.5 936.2 12.8 937.5 12.8C938.9 12.8 939.8 13.6 939.8 14.9C939.8 16.4 937.6 16.6 937.6 18.5" fill="none" stroke="#e0e0e0" stroke-width="1.5"/><circle cx="937.6" cy="20.7" r="0.9" fill="#e0e0e0"/><path d="M962 22.5H974M963.5 22.5V16.5C963.5 13.5 965.5 11.3 968 11.3C970.5 11.3 972.5 13.5 972.5 16.5V22.5M966.3 24.2C966.6 25.2 969.4 25.2 969.7 24.2" fill="none" stroke="#565656" stroke-width="1.4"/><circle cx="993" cy="12.9" r="1.7" fill="#c8c8c8"/><circle cx="997.8" cy="12.9" r="1.7" fill="#c8c8c8"/><circle cx="993" cy="17.6" r="1.7" fill="#c8c8c8"/><circle cx="997.8" cy="17.6" r="1.7" fill="#c8c8c8"/><circle cx="1002.6" cy="17.6" r="1.7" fill="#c8c8c8"/><circle cx="993" cy="22.4" r="1.7" fill="#c8c8c8"/><circle cx="997.8" cy="22.4" r="1.7" fill="#c8c8c8"/><circle cx="1002.6" cy="22.4" r="1.7" fill="#c8c8c8"/><circle cx="1003.4" cy="12.4" r="3.3" fill="#3a86f0"/><path d="M1159 16H1172" stroke="#eaeaea" stroke-width="1.5"/><rect x="1206.5" y="12.5" width="9" height="8.5" fill="none" stroke="#d8d8d8" stroke-width="1.4" rx="1"/><path d="M1209 12.5V10.5C1209 10 1209.5 9.5 1210 9.5H1217.5C1218 9.5 1218.5 10 1218.5 10.5V17.5C1218.5 18 1218 18.5 1217.5 18.5H1215.5" fill="none" stroke="#d8d8d8" stroke-width="1.4"/><path d="M1252.5 9.5L1263 20M1263 9.5L1252.5 20" stroke="#e6e6e6" stroke-width="1.5"/><circle cx="828" cy="53" r="5.6" fill="none" stroke="#dedede" stroke-width="1.6" stroke-linecap="round" stroke-linejoin="round"/><path d="M832.2 57.2L836.5 61.5" fill="none" stroke="#dedede" stroke-width="1.6" stroke-linecap="round" stroke-linejoin="round"/><path d="M855.5 48V62.5M982.5 48V62.5" stroke="#555" stroke-width="1"/><path d="M872.5 48.5H884L887 51.5V61.5H872.5ZM875.5 48.5V53H883.5V48.5M875.5 61.5V56.5H884V61.5" fill="none" stroke="#6c6c6c" stroke-width="1.5" stroke-linejoin="round"/><path d="M915.5 59.5C912.5 59.5 911 57.5 911 55.2C911 52.7 913 51 915.2 51.2C916 48.5 918.2 47 920.5 47C923.5 47 925.6 49.3 925.8 52C927.5 52.3 928.5 53.8 928.5 55.5C928.5 57.8 926.8 59.5 924.5 59.5M919.7 63V53.5M916.5 56.5L919.7 53.2L923 56.5" fill="none" stroke="#dedede" stroke-width="1.6" stroke-linecap="round" stroke-linejoin="round"/><path d="M953 52V47.8H964V52M950.5 58.5V52H966.5V58.5H964M953 58.5H950.5M953 55.5H964V62.5H953ZM955.5 58.7H961.5" fill="none" stroke="#dedede" stroke-width="1.6" stroke-linecap="round" stroke-linejoin="round"/><path d="M1009 61.7C1008.3 62.2 1007.2 62.5 1006 62.5C1001.6 62.5 998.3 59 998.3 54.8C998.3 50.5 1001.8 47 1006 47C1010.3 47 1013.8 50.5 1013.8 54.8M1001.8 60.3C1002.2 58 1003.5 57 1004.2 56.6C1002.6 55.5 1002.3 54 1002.5 52.8C1002.8 51 1004.3 50 1006 50C1007.8 50 1009.3 51.3 1009.3 53.2C1009.3 54.7 1008.5 55.8 1007.6 56.4M1009.5 60.5H1015.5M1012.5 57.5V63.5" fill="none" stroke="#dedede" stroke-width="1.6" stroke-linecap="round" stroke-linejoin="round"/><path d="M1045.5 52.7L1048.2 50C1049.5 48.7 1051.5 48.7 1052.7 50C1054 51.2 1054 53.2 1052.7 54.5L1050 57.2C1048.8 58.4 1046.8 58.4 1045.7 57.3M1046.5 58.3L1043.8 61C1042.5 62.3 1040.5 62.3 1039.3 61C1038 59.8 1038 57.8 1039.3 56.5L1042 53.8C1043.2 52.6 1045.2 52.6 1046.3 53.7" fill="none" stroke="#dedede" stroke-width="1.6" stroke-linecap="round" stroke-linejoin="round"/><rect x="1077.8" y="48.8" width="14.4" height="12.2" rx="1.2" fill="none" stroke="#dedede" stroke-width="1.6" stroke-linecap="round" stroke-linejoin="round"/><path d="M1078.5 50L1085 55.8L1091.5 50M1078.5 60L1083 55.3M1091.5 60L1087 55.3" fill="none" stroke="#dedede" stroke-width="1.6" stroke-linecap="round" stroke-linejoin="round"/><path d="M1130.5 48.6H1123C1122.1 48.6 1121.5 49.2 1121.5 50.1V59.3C1121.5 60.2 1122.1 60.8 1123 60.8H1124.6L1126.2 63.3L1128 60.8H1134.7C1135.6 60.8 1136.2 60.2 1136.2 59.3V54.8" fill="none" stroke="#ffeaea" stroke-width="1.8" stroke-linejoin="round"/><path d="M1135.3 45.8L1136.5 49L1139.7 50.2L1136.5 51.4L1135.3 54.6L1134.1 51.4L1130.9 50.2L1134.1 49Z" fill="#ffeaea"/><path d="M1129.5 53.4L1130.2 54.7L1131.5 55.4L1130.2 56.1L1129.5 57.4L1128.8 56.1L1127.5 55.4L1128.8 54.7Z" fill="#ffeaea"/><rect x="11.5" y="299.5" width="37" height="273" rx="4" fill="#333" stroke="#474747" stroke-width="1"/><rect x="15" y="302" width="30" height="3" rx="1" fill="#565656"/><rect x="15" y="314" width="30" height="30" rx="3" fill="#1b6fe2"/><path d="M26 321.5V334L28.8 331.3L31 336L32.8 335.2L30.6 330.5H34.5Z" fill="#fff"/><path d="M42 341L38 341L42 337Z" fill="#e0e0e0"/><path d="M30 374C34.4 374 37.6 370.7 37.6 366.5C37.6 362.3 34.2 359 30 359C25.8 359 22.4 362.3 22.4 366.5C22.4 370.7 25.8 374 30 374H37.6V366.5" fill="none" stroke="#d4d4d4" stroke-width="1.5" stroke-linecap="round" stroke-linejoin="round"/><path d="M26.3 364.6H33.5M26.3 367.6H31.5" stroke="#d4d4d4" stroke-width="1.5"/><path d="M42 378L38 378L42 374Z" fill="#e0e0e0"/><path d="M25.8 406.5L35 397.3C35.8 396.5 37 396.5 37.7 397.3C38.5 398 38.5 399.2 37.7 400L28.5 409.2Z" fill="none" stroke="#d4d4d4" stroke-width="1.5" stroke-linecap="round" stroke-linejoin="round"/><path d="M22.2 410.3L25.8 406.5L26.8 410.3Z" fill="#e6e6e6"/><path d="M29 409.5H38" stroke="#6a6a6a" stroke-width="2"/><path d="M42 414L38 414L42 410Z" fill="#e0e0e0"/><path d="M31.5 442.6C34.6 442.6 37.2 441.2 37.2 439.2C37.2 437.1 34 435.8 30 435.8C25.5 435.8 22.6 438 22.6 440.9C22.6 443.6 25.6 445.4 30.2 445.4C31.6 445.4 32.6 445.1 33.4 444.6" fill="none" stroke="#d4d4d4" stroke-width="1.5" stroke-linecap="round" stroke-linejoin="round"/><path d="M42 449L38 449L42 445Z" fill="#e0e0e0"/><path d="M21.8 471.2H38.6M21.8 486.2H38.6" fill="none" stroke="#d4d4d4" stroke-width="1.5" stroke-dasharray="1.5 1.3"/><path d="M22.3 474V483.5M38.2 474V483.5" stroke="#d4d4d4" stroke-width="1.6"/><path d="M26.8 484L30.2 475L33.6 484M27.9 481H32.5" fill="none" stroke="#d4d4d4" stroke-width="1.5" stroke-linecap="round" stroke-linejoin="round"/><path d="M42 488L38 488L42 484Z" fill="#e0e0e0"/><path d="M23.5 522.5L24.5 516.5C25 515 26 514 27.5 513.5L31.5 509.5L36.5 514.5L32.5 518.5C32 520 31 521 29.5 521.5ZM23.5 522.5L27.3 518.7M32.5 508.5L34 507L38 511L36.5 512.5M31.5 523C33 521.5 34 523.5 35.5 522C36.5 521 37 522.5 38 522" fill="none" stroke="#d4d4d4" stroke-width="1.5" stroke-linecap="round" stroke-linejoin="round"/><path d="M42 526L38 526L42 522Z" fill="#e0e0e0"/><circle cx="24.5" cy="553.5" r="1" fill="#d0d0d0"/><circle cx="30" cy="553.5" r="1" fill="#d0d0d0"/><circle cx="35.5" cy="553.5" r="1" fill="#d0d0d0"/><path d="M1223.5 88.5L1227 84L1230.5 88.5" fill="none" stroke="#8a8a8a" stroke-width="1.8"/><path d="M1223.5 681.5L1227 685L1230.5 681.5" fill="none" stroke="#8a8a8a" stroke-width="1.4"/><rect x="1249.8" y="94.6" width="14.6" height="13.4" rx="1.8" fill="none" stroke="#d2cef6" stroke-width="1.6"/><path d="M1252.3 97.7H1255.8M1252.3 101.5H1254.6M1252.3 105.2H1256" stroke="#d2cef6" stroke-width="1.5"/><circle cx="1256.9" cy="101.5" r="1.1" fill="#d2cef6"/><path d="M1262.4 90.6L1263.6 94.5L1267.5 95.8L1263.6 97.1L1262.4 101L1261.2 97.1L1257.3 95.8L1261.2 94.5Z" fill="#d2cef6" stroke="#333" stroke-width="1.4" paint-order="stroke"/><path d="M1248 121.5H1268" stroke="#474747" stroke-width="1"/><path d="M1258.5 148.5C1261.8 148.5 1264 146 1264 143.2C1264 140.3 1261.6 138 1258.8 138C1255.8 138 1253.5 140.3 1253.5 143.2C1253.5 146 1255.7 148.5 1258.8 148.5H1264V143.3M1256.5 142H1261M1256.5 144.5H1260M1251.5 141.5C1249.8 145.5 1252.5 150 1257.5 150.5" fill="none" stroke="#d2d2d2" stroke-width="1.5" stroke-linecap="round" stroke-linejoin="round"/><path d="M1250.5 171.5H1257.5V185L1254 181.5L1250.5 185Z" fill="none" stroke="#d2d2d2" stroke-width="1.5" stroke-linecap="round" stroke-linejoin="round"/><path d="M1260.5 174H1264.5M1260.5 177H1264.5M1260.5 180H1264.5" fill="none" stroke="#d2d2d2" stroke-width="1.5" stroke-linecap="round" stroke-linejoin="round"/><path d="M1253 220.5C1251.5 220.5 1250.8 219.7 1250.8 218.5V210C1250.8 208.8 1251.5 208 1253 208M1254 211.5H1259.5L1263.5 215.5V222.3H1254Z M1259.5 211.5V215.5H1263.5" fill="none" stroke="#d2d2d2" stroke-width="1.5" stroke-linecap="round" stroke-linejoin="round"/><path d="M1254 510.5L1257.5 507L1261 510.5M1254 538L1257.5 541.5L1261 538" fill="none" stroke="#e0e0e0" stroke-width="2" stroke-linecap="round" stroke-linejoin="round"/><path d="M1248 556.5H1268" stroke="#474747" stroke-width="1"/><path d="M1264 573C1263 570 1260.5 568.5 1257.8 568.5C1254 568.5 1251 571.5 1251 575.2C1251 579 1254 582 1257.8 582C1260.5 582 1262.8 580.5 1263.8 578M1264.5 568V573.3H1259.5" fill="none" stroke="#d2d2d2" stroke-width="1.5" stroke-linecap="round" stroke-linejoin="round"/><path d="M1252 601H1259.5L1263 604.5V615H1252Z" fill="none" stroke="#d2d2d2" stroke-width="1.5" stroke-linecap="round" stroke-linejoin="round"/><path d="M1255.3 611.5L1259.3 606.5M1255.3 608.8V611.5H1258M1259.3 606.5V609.2M1259.3 606.5H1256.5" fill="none" stroke="#d2d2d2" stroke-width="1.2"/><path d="M1266 616L1262.5 616L1266 612.5Z" fill="#d2d2d2"/><circle cx="1256.5" cy="641.5" r="5" fill="none" stroke="#d2d2d2" stroke-width="1.5" stroke-linecap="round" stroke-linejoin="round"/><path d="M1260.3 645.3L1264 649M1254 641.5H1259M1256.5 639V644" fill="none" stroke="#d2d2d2" stroke-width="1.5" stroke-linecap="round" stroke-linejoin="round"/><circle cx="1256.5" cy="674.5" r="5" fill="none" stroke="#d2d2d2" stroke-width="1.5" stroke-linecap="round" stroke-linejoin="round"/><path d="M1260.3 678.3L1264 682M1254 674.5H1259" fill="none" stroke="#d2d2d2" stroke-width="1.5" stroke-linecap="round" stroke-linejoin="round"/><path d="M9.5 699.5L15.5 698.7V705H9.5ZM16.5 698.5L24.5 697.5V705H16.5ZM9.5 706H15.5V712.3L9.5 711.5ZM16.5 706H24.5V713.5L16.5 712.5Z" fill="#fafafa"/><path d="M34.5 691V720M34.5 691.5H275" stroke="#505050" stroke-width="1"/><circle cx="54.5" cy="703.5" r="5" fill="none" stroke="#d0d0d0" stroke-width="1.3"/><path d="M51 707L45.5 712.5" stroke="#d0d0d0" stroke-width="1.4"/><path d="M287 700H293L295 701.5H303V712H287Z" fill="#e8c35a"/><rect x="287" y="703" width="16" height="9" fill="#f5d576"/><rect x="291.5" y="706.5" width="7" height="5" fill="#5a8ab0"/><circle cx="329.5" cy="705.5" r="7.5" fill="#db4437"/><path d="M329.5 705.5L322.0 705.5A7.5 7.5 0 0 0 333.2 712.0Z" fill="#0f9d58"/><path d="M329.5 705.5L333.2 712.0A7.5 7.5 0 0 0 336.0 701.8Z" fill="#f4c20d"/><circle cx="329.5" cy="705.5" r="3.6" fill="#fff"/><circle cx="329.5" cy="705.5" r="2.7" fill="#4285f4"/><circle cx="333.0" cy="709.0" r="3" fill="#222"/><circle cx="364.5" cy="705.5" r="7.5" fill="#db4437"/><path d="M364.5 705.5L357.0 705.5A7.5 7.5 0 0 0 368.2 712.0Z" fill="#0f9d58"/><path d="M364.5 705.5L368.2 712.0A7.5 7.5 0 0 0 371.0 701.8Z" fill="#f4c20d"/><circle cx="364.5" cy="705.5" r="3.6" fill="#fff"/><circle cx="364.5" cy="705.5" r="2.7" fill="#4285f4"/><circle cx="368.0" cy="709.0" r="3" fill="#222"/><circle cx="399.5" cy="705.5" r="7.5" fill="#db4437"/><path d="M399.5 705.5L392.0 705.5A7.5 7.5 0 0 0 403.2 712.0Z" fill="#0f9d58"/><path d="M399.5 705.5L403.2 712.0A7.5 7.5 0 0 0 406.0 701.8Z" fill="#f4c20d"/><circle cx="399.5" cy="705.5" r="3.6" fill="#fff"/><circle cx="399.5" cy="705.5" r="2.7" fill="#4285f4"/><circle cx="403.0" cy="709.0" r="3" fill="#222"/><rect x="428" y="698" width="13" height="14" rx="1.5" fill="#1a75d2"/><rect x="425" y="701" width="9" height="9" rx="1" fill="#0f5fae"/><circle cx="429.5" cy="705.5" r="2.6" fill="none" stroke="#fff" stroke-width="1.4"/><rect x="463" y="698" width="13" height="14" rx="1.5" fill="#2b7cd3"/><rect x="460.5" y="701" width="9" height="9" rx="1" fill="#185abd"/><path d="M461.8 703L463 708.5L465 704L467 708.5L468.2 703" fill="none" stroke="#fff" stroke-width="1.1"/><rect x="496" y="698" width="14" height="15" rx="1.5" fill="#3a3fb8"/><path d="M499 700.5H507M497.5 711L499.5 704.5H508.5V711Z" fill="none" stroke="#e8e8ff" stroke-width="1.3"/><text x="537.5" y="709" font-family="Liberation Sans" font-weight="bold" font-size="9" fill="#fff" text-anchor="middle">CS</text><rect x="531" y="709.5" width="13" height="2" fill="#2bb58a"/><rect x="566.5" y="698" width="11.5" height="15" rx="1" fill="#8a9aa6"/><rect x="568" y="699.5" width="8.5" height="3" fill="#c8d4dc"/><rect x="568.2" y="704" width="2" height="2" fill="#e6eef2"/><rect x="571.2" y="704" width="2" height="2" fill="#e6eef2"/><rect x="574.2" y="704" width="2" height="2" fill="#e6eef2"/><rect x="568.2" y="707" width="2" height="2" fill="#e6eef2"/><rect x="571.2" y="707" width="2" height="2" fill="#e6eef2"/><rect x="574.2" y="707" width="2" height="2" fill="#e6eef2"/><rect x="568.2" y="710" width="2" height="2" fill="#e6eef2"/><rect x="571.2" y="710" width="2" height="2" fill="#e6eef2"/><rect x="574.2" y="710" width="2" height="2" fill="#e6eef2"/><path d="M600 703L614 698.5V702.5H614.5V712.5H600Z" fill="#a855e8"/><rect x="600" y="704" width="15" height="8.5" fill="#c77dff"/><path d="M641 698.5L648 705.5L641 712.5L634 705.5Z" fill="#6a5de0"/><path d="M639.5 703V708L643.5 705.5Z" fill="#fff"/><circle cx="676" cy="705.5" r="6.8" fill="none" stroke="#2fb350" stroke-width="1.8"/><path d="M670 712L671 708.5" stroke="#2fb350" stroke-width="1.8"/><path d="M673.5 703C673.8 706 675.5 708 678.5 708.5" fill="none" stroke="#2fb350" stroke-width="1.8"/><circle cx="713.5" cy="700.5" r="2.2" fill="#7b83eb"/><rect x="711" y="703" width="7" height="8" rx="3" fill="#7b83eb"/><rect x="703.5" y="701.5" width="9" height="9.5" rx="1" fill="#5059c9"/><path d="M705.5 704H710.5M708 704V709" stroke="#fff" stroke-width="1.3"/><circle cx="745.5" cy="705.5" r="7.5" fill="#1ed760"/><path d="M741 703.3C743.5 702.3 747.5 702.5 750 704M741.7 705.8C743.8 705 747 705.2 749 706.5M742.5 708.2C744.2 707.6 746.5 707.8 748 708.8" fill="none" stroke="#13391f" stroke-width="1.2" stroke-linecap="round"/><rect x="774" y="698.5" width="13" height="13.5" rx="1.5" fill="#3b86d6"/><path d="M774 710L779 703.5L787 711V712H774Z" fill="#7fd0f7"/><circle cx="783.5" cy="701.5" r="1.3" fill="#fff"/><rect x="798" y="691.5" width="34" height="28.5" fill="#38434e"/><rect x="808" y="698" width="14.5" height="14.5" rx="2" fill="#c7201d"/><path d="M810.5 710.5C812.5 709 815 704 815 700.5C815 699.5 814.6 699.3 814.3 699.6C813.6 700.5 815.5 705 819.5 707.5C820.8 708.3 821.5 707.8 820.5 707.2C819 706.3 815 706.5 811 710.5" fill="none" stroke="#fff" stroke-width="1" stroke-linejoin="round"/><rect x="282" y="718" width="26" height="2" fill="#8fb8de"/><rect x="351" y="718" width="26" height="2" fill="#8fb8de"/><rect x="420" y="718" width="26" height="2" fill="#8fb8de"/><rect x="455" y="718" width="26" height="2" fill="#8fb8de"/><rect x="559" y="718" width="26" height="2" fill="#8fb8de"/><rect x="663" y="718" width="26" height="2" fill="#8fb8de"/><rect x="732" y="718" width="27" height="2" fill="#8fb8de"/><rect x="767" y="718" width="26" height="2" fill="#8fb8de"/><rect x="798" y="718" width="34" height="2" fill="#8fb8de"/><path d="M1155.5 709L1160 704.5L1164.5 709" fill="none" stroke="#e6e6e6" stroke-width="1.2"/><path d="M1178 703.5H1187.5V710H1178.5" fill="none" stroke="#e0e0e0" stroke-width="1.2"/><path d="M1187.5 705.5H1189V708.5H1187.5M1175.5 700.5V703M1178 700.5V703M1175 703.5H1178.3V706C1178.3 707.2 1177.5 708 1176.6 708V711" fill="none" stroke="#e0e0e0" stroke-width="1.1"/><path d="M1198.5 700.3L1204.3 698.3L1210.2 700.3V705C1210.2 709 1207.5 711.5 1204.3 713C1201.2 711.5 1198.5 709 1198.5 705Z" fill="#f4f4f4"/><path d="M1204.3 698.5V713M1198.5 705.3H1210.2" stroke="#1f2a3a" stroke-width="1"/><circle cx="1208" cy="710" r="3" fill="#1fa14b"/><path d="M1206.5 710L1207.6 711L1209.5 709" fill="none" stroke="#fff" stroke-width="0.9"/><path d="M1223.5 712C1224.5 707 1228.5 703.3 1233.5 702.8M1226 712C1226.8 708.8 1229.5 706.3 1233 706M1228.6 712C1229.2 710.5 1230.8 709.2 1232.5 709" fill="none" stroke="#e0e0e0" stroke-width="1.1"/><circle cx="1232.2" cy="711.5" r="1.2" fill="#e8e8e8"/></svg>
</body></html>
